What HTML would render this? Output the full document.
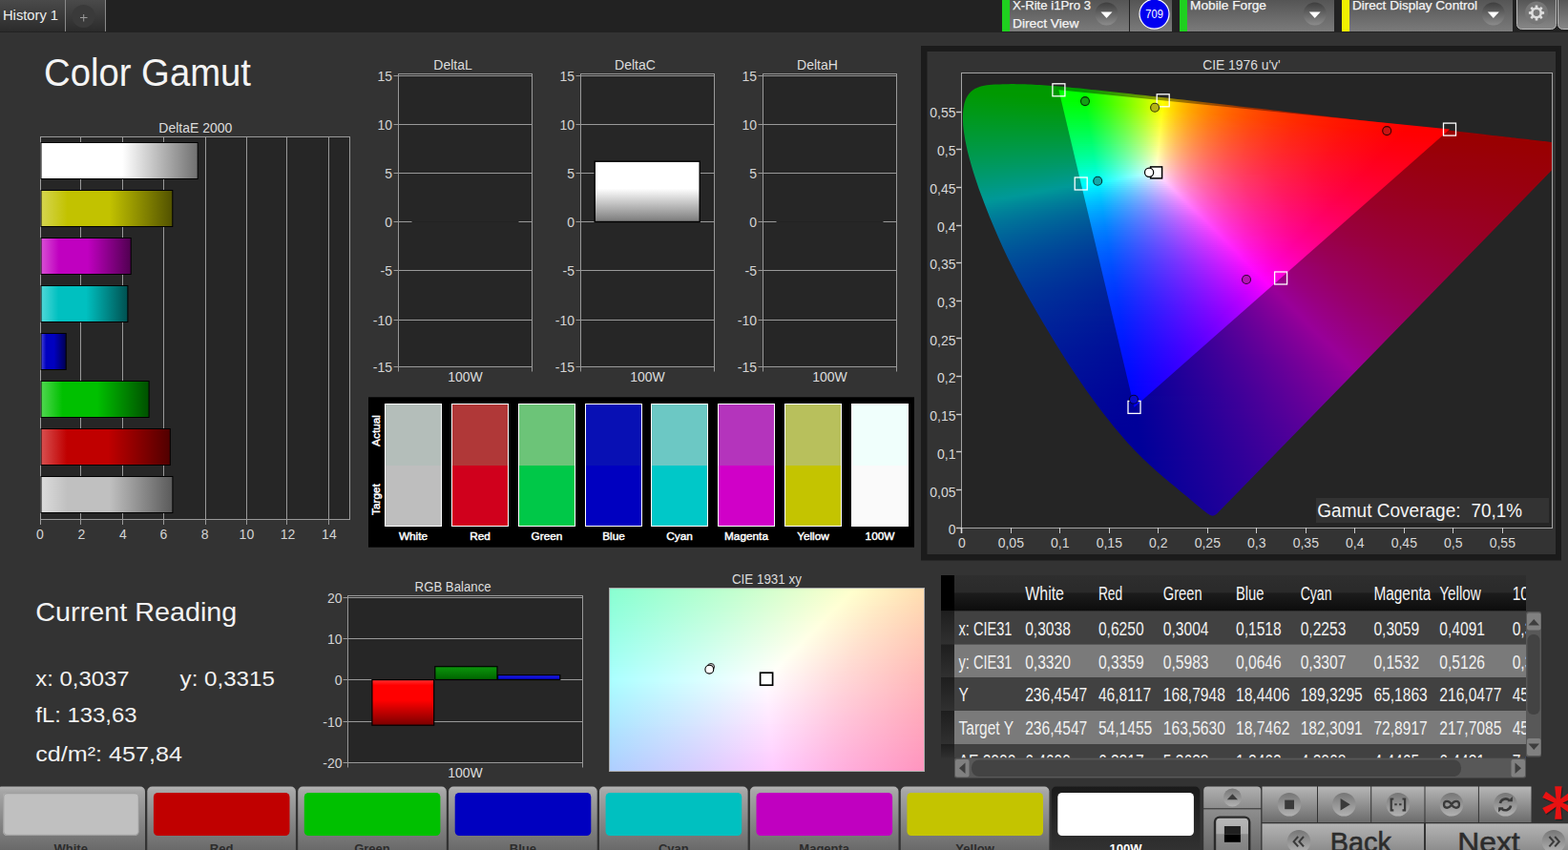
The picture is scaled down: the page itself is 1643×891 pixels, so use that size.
<!DOCTYPE html>
<html lang="en"><head><meta charset="utf-8"><title>Color Gamut</title>
<style>
html,body{margin:0;padding:0}
body{width:1643px;height:891px;overflow:hidden;background:#333;position:relative;font-family:"Liberation Sans",sans-serif}
svg{position:absolute;left:0;top:0}
text{font-family:"Liberation Sans",sans-serif}
.cie{position:absolute;overflow:hidden}
.cie i{position:absolute;left:0;width:100%;height:2px;display:block}
</style></head>
<body>
<svg width="1643" height="891" viewBox="0 0 1643 891">
<rect x="965" y="48" width="671" height="539.5" fill="#1b1b1b"/>
<rect x="971.5" y="54" width="658.5" height="527" fill="#333"/>
<rect x="1007.5" y="76.5" width="619" height="477" fill="#252525" stroke="#a4a4a4" stroke-width="1"/>
</svg>
<div class="cie" style="left:1008px;top:77px;width:618px;height:476px;clip-path:polygon(259.6px 462.7px,259.1px 462.4px,258.6px 462.1px,258.1px 461.8px,257.5px 461.4px,256.9px 461.0px,256.3px 460.5px,255.6px 460.0px,254.9px 459.4px,254.1px 458.8px,253.3px 458.2px,252.4px 457.5px,251.4px 456.7px,250.4px 455.9px,249.3px 455.0px,248.1px 454.1px,246.9px 453.1px,245.7px 452.0px,244.4px 450.9px,243.0px 449.7px,241.6px 448.5px,240.1px 447.2px,238.5px 445.9px,236.9px 444.5px,235.1px 443.0px,233.2px 441.5px,231.3px 439.9px,229.2px 438.2px,227.0px 436.4px,224.8px 434.5px,222.4px 432.5px,219.9px 430.5px,217.4px 428.4px,214.8px 426.2px,212.0px 423.9px,209.2px 421.5px,206.2px 418.9px,203.1px 416.2px,199.9px 413.3px,196.5px 410.3px,193.1px 407.1px,189.6px 403.7px,185.9px 400.1px,182.1px 396.3px,178.1px 392.1px,173.8px 387.4px,169.3px 382.3px,164.4px 376.6px,159.3px 370.4px,153.8px 363.6px,148.2px 356.5px,142.5px 348.9px,136.5px 340.8px,130.5px 332.4px,124.3px 323.5px,117.9px 314.1px,111.4px 304.3px,104.9px 294.0px,98.3px 283.4px,91.7px 272.6px,85.1px 261.5px,78.5px 250.3px,72.0px 238.9px,65.6px 227.5px,59.4px 216.0px,53.5px 204.5px,47.9px 193.2px,42.6px 182.0px,37.7px 171.0px,33.1px 160.3px,28.8px 149.9px,24.8px 139.8px,21.1px 130.1px,17.7px 120.9px,14.7px 112.1px,12.0px 103.8px,9.7px 96.0px,7.7px 88.7px,5.9px 81.9px,4.5px 75.5px,3.3px 69.5px,2.4px 64.0px,1.7px 58.9px,1.2px 54.2px,1.0px 49.8px,0.9px 45.7px,1.0px 41.9px,1.3px 38.3px,1.8px 34.9px,2.4px 31.7px,3.3px 28.8px,4.4px 26.0px,5.8px 23.5px,7.4px 21.2px,9.2px 19.2px,11.3px 17.4px,13.5px 16.0px,15.9px 14.9px,18.3px 14.0px,20.8px 13.3px,23.4px 12.7px,26.0px 12.3px,28.6px 12.0px,31.3px 11.8px,34.1px 11.6px,36.9px 11.5px,39.7px 11.4px,42.6px 11.3px,45.5px 11.2px,48.4px 11.2px,51.4px 11.1px,54.3px 11.1px,57.2px 11.2px,60.1px 11.2px,63.1px 11.3px,66.1px 11.3px,69.1px 11.4px,72.1px 11.6px,75.2px 11.7px,78.3px 11.9px,81.4px 12.1px,84.6px 12.3px,87.9px 12.5px,91.2px 12.7px,94.5px 13.0px,97.9px 13.2px,101.4px 13.5px,104.9px 13.8px,108.5px 14.2px,112.2px 14.5px,115.9px 14.9px,119.7px 15.2px,123.6px 15.6px,127.5px 16.0px,131.5px 16.4px,135.6px 16.9px,139.8px 17.3px,144.1px 17.8px,148.5px 18.2px,153.0px 18.7px,157.5px 19.2px,162.2px 19.7px,166.9px 20.3px,171.7px 20.8px,176.7px 21.3px,181.7px 21.9px,186.8px 22.5px,192.1px 23.1px,197.4px 23.7px,202.9px 24.3px,208.5px 24.9px,214.1px 25.6px,219.9px 26.2px,225.8px 26.9px,231.8px 27.6px,237.9px 28.3px,244.1px 29.0px,250.4px 29.8px,256.9px 30.5px,263.4px 31.2px,270.0px 32.0px,276.7px 32.8px,283.6px 33.6px,290.5px 34.4px,297.5px 35.2px,304.6px 36.0px,311.8px 36.8px,319.0px 37.6px,326.4px 38.5px,333.8px 39.3px,341.2px 40.2px,348.7px 41.1px,356.3px 41.9px,363.9px 42.8px,371.4px 43.7px,378.9px 44.5px,386.3px 45.4px,393.7px 46.2px,400.9px 47.1px,408.2px 47.9px,415.4px 48.7px,422.6px 49.6px,429.8px 50.4px,437.0px 51.2px,444.0px 52.0px,450.9px 52.8px,457.6px 53.6px,464.2px 54.3px,470.6px 55.1px,476.9px 55.8px,483.0px 56.5px,489.0px 57.2px,494.8px 57.8px,500.5px 58.5px,506.0px 59.1px,511.4px 59.7px,516.6px 60.3px,521.6px 60.9px,526.4px 61.5px,531.1px 62.0px,535.6px 62.5px,540.0px 63.0px,544.2px 63.5px,548.2px 64.0px,552.1px 64.4px,555.9px 64.9px,559.6px 65.3px,563.1px 65.7px,566.5px 66.1px,569.8px 66.4px,573.0px 66.8px,576.1px 67.2px,579.2px 67.5px,582.1px 67.9px,585.0px 68.2px,587.8px 68.5px,590.5px 68.8px,593.1px 69.1px,595.6px 69.4px,598.0px 69.7px,600.3px 70.0px,602.5px 70.2px,604.7px 70.5px,606.8px 70.7px,608.7px 70.9px,610.6px 71.1px,612.3px 71.3px,613.9px 71.5px,615.5px 71.7px,616.9px 71.9px,618.3px 72.0px,619.6px 72.2px,620.9px 72.3px,622.1px 72.5px,623.3px 72.6px,624.4px 72.7px,625.4px 72.9px,626.4px 73.0px,627.3px 73.1px,628.1px 73.2px,628.9px 73.3px,629.6px 73.3px,630.3px 73.4px,630.9px 73.5px,631.4px 73.5px,632.0px 73.6px,632.5px 73.7px,633.0px 73.7px,633.5px 73.8px,634.0px 73.8px,634.4px 73.9px,634.9px 73.9px,635.3px 74.0px,635.7px 74.0px,636.0px 74.1px,636.4px 74.1px,636.8px 74.2px,637.2px 74.2px,637.6px 74.3px,638.0px 74.3px,638.3px 74.3px,638.7px 74.4px,639.1px 74.4px,639.4px 74.5px,639.8px 74.5px,640.1px 74.5px,640.3px 74.6px,640.6px 74.6px,640.7px 74.6px,640.9px 74.6px,641.0px 74.7px,641.2px 74.7px,641.3px 74.7px,641.4px 74.7px,641.5px 74.7px,641.6px 74.7px,641.7px 74.7px,641.8px 74.7px,641.8px 74.7px,641.9px 74.8px,641.9px 74.8px,641.9px 76.8px,269.5px 459.1px,267.2px 461.4px,265.0px 463.1px,262.6px 463.7px,260.6px 463.3px)">
<i style="top:10px;background:linear-gradient(90deg,#090 34.5px,#090 73.5px)"></i>
<i style="top:12px;background:linear-gradient(90deg,#090 17.5px,#090 103.5px)"></i>
<i style="top:14px;background:linear-gradient(90deg,#090 12.5px,#090 125.5px)"></i>
<i style="top:16px;background:linear-gradient(90deg,#090 9.5px,#090 126.5px,#1a9900 144.5px)"></i>
<i style="top:18px;background:linear-gradient(90deg,#009901 6.5px,#090 126.5px,#189900 143.5px,#399900 163.5px)"></i>
<i style="top:20px;background:linear-gradient(90deg,#009903 5.5px,#090 45.5px,#090 127.5px,#2b9900 155.5px,#5a9900 181.5px)"></i>
<i style="top:22px;background:linear-gradient(90deg,#009905 3.5px,#090 66.5px,#090 127.5px,#3a9900 164.5px,#5a9900 181.5px,#7c9900 198.5px)"></i>
<i style="top:24px;background:linear-gradient(90deg,#009907 2.5px,#009901 77.5px,#090 127.5px,#1f9900 148.5px,#479900 171.5px,#6e9900 191.5px,#989900 210.5px,#998d00 216.5px)"></i>
<i style="top:26px;background:linear-gradient(90deg,#00990a 1.5px,#009901 99.5px,#090 128.5px,#249900 151.5px,#489900 172.5px,#709900 192.5px,#989900 210.5px,#998000 222.5px,#996e00 233.5px)"></i>
<i style="top:28px;background:linear-gradient(90deg,#00990c 1.5px,#090 128.5px,#239900 151.5px,#489900 172.5px,#709900 192.5px,#990 210.5px,#998600 219.5px,#997400 229.5px,#995700 251.5px)"></i>
<i style="top:30px;background:linear-gradient(90deg,#00990e 0.5px,#009902 128.5px,#209900 149.5px,#469900 171.5px,#6e9900 191.5px,#990 210.5px,#998000 222.5px,#996b00 235.5px,#995800 250.5px,#994700 268.5px)"></i>
<i style="top:32px;background:linear-gradient(90deg,#009910 0.5px,#019905 129.5px,#239902 151.5px,#469900 171.5px,#6e9900 191.5px,#979900 209.5px,#999800 210.5px,#997800 226.5px,#996100 242.5px,#994c00 262.5px,#993a00 285.5px)"></i>
<i style="top:34px;background:linear-gradient(90deg,#009912 0.5px,#009908 129.5px,#239905 151.5px,#469903 171.5px,#6e9900 191.5px,#989900 209.5px,#997400 228.5px,#995900 248.5px,#994200 273.5px,#992f00 303.5px)"></i>
<i style="top:36px;background:linear-gradient(90deg,#009914 0.5px,#00990b 129.5px,#219908 150.5px,#469906 171.5px,#6f9903 191.5px,#989901 209.5px,#998400 219.5px,#997200 229.5px,#996200 240.5px,#995300 253.5px,#993b00 283.5px,#992700 320.5px)"></i>
<i style="top:38px;background:linear-gradient(90deg,#009916 0.5px,#01990d 130.5px,#24990b 152.5px,#489909 172.5px,#6f9906 191.5px,#999904 209.5px,#998102 220.5px,#996f00 231.5px,#995d00 244.5px,#994e00 258.5px,#993400 293.5px,#991f00 338.5px)"></i>
<i style="top:40px;background:linear-gradient(90deg,#009918 0.5px,#009910 130.5px,#23990e 152.5px,#48990c 172.5px,#6f990a 191.5px,#999907 209.5px,#998105 220.5px,#996b03 233.5px,#995901 247.5px,#994900 263.5px,#993a00 282.5px,#992e00 303.5px,#991900 355.5px)"></i>
<i style="top:42px;background:linear-gradient(90deg,#00991a 0.5px,#009913 130.5px,#209911 150.5px,#46990f 171.5px,#6d990d 190.5px,#97990b 208.5px,#99980b 209.5px,#997d08 222.5px,#996805 235.5px,#995503 250.5px,#994401 268.5px,#993500 289.5px,#992900 313.5px,#991400 372.5px)"></i>
<i style="top:44px;background:linear-gradient(90deg,#00991d 0.5px,#019916 131.5px,#239914 152.5px,#489913 172.5px,#6f9911 191.5px,#98990f 208.5px,#997c0b 222.5px,#996608 236.5px,#995105 253.5px,#994002 273.5px,#993100 296.5px,#992400 323.5px,#990f00 390.5px)"></i>
<i style="top:46px;background:linear-gradient(90deg,#00991f 0.5px,#009919 131.5px,#229918 152.5px,#459916 171.5px,#699915 188.5px,#999713 209.5px,#997c0e 222.5px,#99630a 238.5px,#994e07 256.5px,#993c04 278.5px,#992d01 303.5px,#992000 332.5px,#991500 367.5px,#990b00 407.5px)"></i>
<i style="top:48px;background:linear-gradient(90deg,#009921 0.5px,#00991c 131.5px,#1f991b 150.5px,#43991a 170.5px,#679918 187.5px,#989917 208.5px,#999716 209.5px,#997911 223.5px,#995f0c 240.5px,#994b08 259.5px,#993905 282.5px,#992902 309.5px,#991c00 342.5px,#910 380.5px,#990800 425.5px)"></i>
<i style="top:50px;background:linear-gradient(90deg,#009923 0.5px,#01991f 132.5px,#24991e 153.5px,#47991d 172.5px,#70991c 191.5px,#99991b 208.5px,#997914 223.5px,#995f0f 240.5px,#99480a 261.5px,#993506 286.5px,#992603 316.5px,#991901 351.5px,#990e00 393.5px,#990400 442.5px)"></i>
<i style="top:52px;background:linear-gradient(90deg,#009925 0.5px,#092 132.5px,#239921 153.5px,#479920 172.5px,#6e991f 190.5px,#99991e 208.5px,#997817 223.5px,#995c11 242.5px,#99450c 264.5px,#993308 290.5px,#992304 321.5px,#991601 359.5px,#990b00 404.5px,#990200 459.5px)"></i>
<i style="top:54px;background:linear-gradient(90deg,#009928 0.5px,#009925 132.5px,#1f9925 151.5px,#459924 171.5px,#6c9923 189.5px,#999822 208.5px,#99851e 216.5px,#99761a 224.5px,#995a13 243.5px,#99430e 266.5px,#993009 294.5px,#991f05 329.5px,#991202 371.5px,#990600 427.5px,#900 477.5px)"></i>
<i style="top:56px;background:linear-gradient(90deg,#00992a 0.5px,#019928 133.5px,#239928 153.5px,#479927 172.5px,#699927 188.5px,#999826 208.5px,#998521 216.5px,#99741d 225.5px,#995715 245.5px,#99400f 269.5px,#992d0a 299.5px,#991c06 338.5px,#990e02 387.5px,#900 466.5px,#900 494.5px)"></i>
<i style="top:58px;background:linear-gradient(90deg,#00992c 0.5px,#00992b 133.5px,#22992b 153.5px,#45992b 171.5px,#67992b 187.5px,#98992b 207.5px,#99972a 208.5px,#998425 216.5px,#997320 225.5px,#99631b 235.5px,#995417 247.5px,#993d10 273.5px,#99290b 305.5px,#991806 349.5px,#990a02 405.5px,#900 465.5px,#900 512.5px)"></i>
<i style="top:60px;background:linear-gradient(90deg,#00992f 0.5px,#00992f 133.5px,#20992f 152.5px,#47992f 172.5px,#6e992f 190.5px,#99992f 207.5px,#998428 216.5px,#997323 225.5px,#99631e 235.5px,#99541a 247.5px,#993b12 274.5px,#99270c 308.5px,#991507 357.5px,#990702 420.5px,#900 463.5px,#900 529.5px)"></i>
<i style="top:62px;background:linear-gradient(90deg,#009931 0.5px,#009932 133.5px,#1e9932 151.5px,#493 171.5px,#6c9933 189.5px,#993 207.5px,#99832c 216.5px,#997226 225.5px,#996121 236.5px,#99521c 248.5px,#993914 277.5px,#99240d 313.5px,#991207 367.5px,#990302 438.5px,#990001 462.5px,#900 547.5px)"></i>
<i style="top:64px;background:linear-gradient(90deg,#093 0.5px,#009935 134.5px,#239936 154.5px,#469936 172.5px,#6c9937 189.5px,#999837 207.5px,#998330 216.5px,#997029 226.5px,#995f23 237.5px,#99501e 250.5px,#993615 280.5px,#99220e 317.5px,#990f07 377.5px,#990002 456.5px,#900 564.5px)"></i>
<i style="top:66px;background:linear-gradient(90deg,#009936 0.5px,#009939 134.5px,#1f9939 152.5px,#44993a 171.5px,#6a993b 188.5px,#99983b 207.5px,#998233 216.5px,#996f2c 226.5px,#995d26 238.5px,#994e20 251.5px,#993416 282.5px,#99200f 322.5px,#990e08 380.5px,#990003 457.5px,#900 581.5px)"></i>
<i style="top:68px;background:linear-gradient(90deg,#009938 1.5px,#00993c 134.5px,#1d993d 151.5px,#42993e 170.5px,#65993f 186.5px,#989940 206.5px,#999740 207.5px,#998237 216.5px,#996d2f 227.5px,#995b28 239.5px,#994c22 252.5px,#993f1d 267.5px,#993218 285.5px,#991e10 326.5px,#990d09 382.5px,#990004 455.5px,#900 599.5px)"></i>
<i style="top:70px;background:linear-gradient(90deg,#00993a 1.5px,#009940 135.5px,#229941 154.5px,#449942 171.5px,#6d9943 189.5px,#999945 206.5px,#999744 207.5px,#997f3a 217.5px,#996b31 228.5px,#995a2a 240.5px,#994a24 254.5px,#993019 287.5px,#991c11 330.5px,#990c0a 384.5px,#990005 453.5px,#900 616.5px)"></i>
<i style="top:72px;background:linear-gradient(90deg,#00993d 1.5px,#009943 135.5px,#229945 154.5px,#469946 172.5px,#6d9948 189.5px,#999949 206.5px,#99833f 215.5px,#996e36 226.5px,#995c2e 238.5px,#994b27 252.5px,#993d21 268.5px,#99301b 286.5px,#991c12 329.5px,#990c0b 383.5px,#990006 451.5px,#900 617.5px)"></i>
<i style="top:74px;background:linear-gradient(90deg,#00993f 2.5px,#009947 135.5px,#1d9948 152.5px,#44994a 171.5px,#6b994c 188.5px,#99984e 206.5px,#998243 215.5px,#996d39 226.5px,#995b31 238.5px,#994b2a 252.5px,#993c23 268.5px,#99301d 286.5px,#991b14 329.5px,#990c0d 382.5px,#990007 449.5px,#900 617.5px)"></i>
<i style="top:76px;background:linear-gradient(90deg,#009942 2.5px,#00994a 136.5px,#23994c 155.5px,#46994e 172.5px,#6b9950 188.5px,#999852 206.5px,#998247 215.5px,#996c3d 226.5px,#995a34 238.5px,#994a2c 252.5px,#993c25 268.5px,#992f1f 286.5px,#991b15 329.5px,#990c0e 381.5px,#990008 447.5px,#990001 617.5px)"></i>
<i style="top:78px;background:linear-gradient(90deg,#094 3.5px,#00994e 136.5px,#219950 154.5px,#469952 172.5px,#689954 187.5px,#989957 205.5px,#999756 206.5px,#99814b 215.5px,#996c40 226.5px,#995a37 238.5px,#994a2f 252.5px,#993b28 268.5px,#992f21 286.5px,#991b17 329.5px,#990c0f 380.5px,#990009 445.5px,#990001 617.5px)"></i>
<i style="top:80px;background:linear-gradient(90deg,#009947 3.5px,#009952 136.5px,#1c9954 152.5px,#439956 171.5px,#6d9959 189.5px,#98995c 205.5px,#99975b 206.5px,#99804f 215.5px,#996b44 226.5px,#99593a 238.5px,#994931 252.5px,#993b2a 268.5px,#992f23 286.5px,#991a18 329.5px,#990c11 379.5px,#99000a 443.5px,#990002 617.5px)"></i>
<i style="top:82px;background:linear-gradient(90deg,#00994a 4.5px,#009956 137.5px,#249958 156.5px,#48995b 173.5px,#6e995e 189.5px,#999961 205.5px,#998254 214.5px,#996c48 225.5px,#995a3e 237.5px,#994a35 251.5px,#993c2d 266.5px,#992f26 284.5px,#991b1a 327.5px,#990c12 377.5px,#99000b 441.5px,#990002 617.5px)"></i>
<i style="top:84px;background:linear-gradient(90deg,#00994c 4.5px,#009959 137.5px,#21995c 155.5px,#47995f 173.5px,#6e9962 189.5px,#996 205.5px,#998258 214.5px,#996c4c 225.5px,#995a41 237.5px,#994937 251.5px,#993b2f 266.5px,#992f28 284.5px,#991a1c 327.5px,#990c13 377.5px,#99000d 439.5px,#990003 617.5px)"></i>
<i style="top:86px;background:linear-gradient(90deg,#00994f 5.5px,#00995d 137.5px,#1f9960 154.5px,#459964 172.5px,#6b9967 188.5px,#99986a 205.5px,#99815c 214.5px,#996b4f 225.5px,#995944 237.5px,#99493a 251.5px,#993b32 266.5px,#992e2a 284.5px,#991a1d 327.5px,#990b15 376.5px,#99000e 438.5px,#990004 617.5px)"></i>
<i style="top:88px;background:linear-gradient(90deg,#009952 5.5px,#009961 138.5px,#239965 156.5px,#459968 172.5px,#69996c 187.5px,#99976f 205.5px,#998060 214.5px,#996b53 225.5px,#995847 237.5px,#99483d 251.5px,#993a34 266.5px,#992e2c 284.5px,#99191f 327.5px,#990b16 376.5px,#99000f 436.5px,#990004 617.5px)"></i>
<i style="top:90px;background:linear-gradient(90deg,#009954 6.5px,#009965 138.5px,#209969 155.5px,#45996d 172.5px,#6e9971 189.5px,#989975 204.5px,#999774 205.5px,#998065 214.5px,#996a56 225.5px,#99584a 237.5px,#99473f 251.5px,#993a36 266.5px,#992d2e 284.5px,#991920 327.5px,#990b17 375.5px,#990010 434.5px,#990005 617.5px)"></i>
<i style="top:92px;background:linear-gradient(90deg,#009957 6.5px,#00995f 78.5px,#009969 138.5px,#1e996d 154.5px,#429971 171.5px,#6c9976 188.5px,#99997b 204.5px,#999679 205.5px,#997f69 214.5px,#99695a 225.5px,#99574d 237.5px,#994843 250.5px,#993a39 265.5px,#992d30 283.5px,#991922 327.5px,#990b19 374.5px,#901 432.5px,#990005 617.5px)"></i>
<i style="top:94px;background:linear-gradient(90deg,#00995a 7.5px,#009963 79.5px,#01996e 139.5px,#249972 157.5px,#479976 173.5px,#6f997b 189.5px,#999980 204.5px,#99816f 213.5px,#996b5f 224.5px,#995851 236.5px,#994846 249.5px,#993a3c 264.5px,#992e33 282.5px,#991924 325.5px,#990b1a 372.5px,#990012 430.5px,#990006 617.5px)"></i>
<i style="top:96px;background:linear-gradient(90deg,#00995d 7.5px,#096 79.5px,#009972 139.5px,#219976 156.5px,#47997b 173.5px,#6c9980 188.5px,#999885 204.5px,#998073 213.5px,#996a62 224.5px,#995755 236.5px,#994849 249.5px,#993a3f 264.5px,#992d35 282.5px,#991826 325.5px,#990b1c 371.5px,#990014 428.5px,#99000c 511.5px,#990007 617.5px)"></i>
<i style="top:98px;background:linear-gradient(90deg,#009960 8.5px,#00996a 80.5px,#009976 139.5px,#1f997a 155.5px,#449980 172.5px,#679984 186.5px,#99988a 204.5px,#998077 213.5px,#996966 224.5px,#995758 236.5px,#99474c 249.5px,#993941 264.5px,#992d37 282.5px,#991827 325.5px,#990b1d 370.5px,#990015 426.5px,#99000d 509.5px,#990007 617.5px)"></i>
<i style="top:100px;background:linear-gradient(90deg,#009963 9.5px,#00996e 81.5px,#01997b 140.5px,#20997f 156.5px,#449984 172.5px,#679989 186.5px,#989991 203.5px,#99978f 204.5px,#997f7c 213.5px,#99696a 224.5px,#99565b 236.5px,#99474f 249.5px,#993944 264.5px,#992c39 282.5px,#991829 325.5px,#990b1f 369.5px,#990016 424.5px,#99000e 508.5px,#990008 617.5px)"></i>
<i style="top:102px;background:linear-gradient(90deg,#009965 9.5px,#009971 81.5px,#00997f 140.5px,#209984 156.5px,#449989 172.5px,#6d9990 188.5px,#999996 203.5px,#999694 204.5px,#997e80 213.5px,#99686e 224.5px,#99565e 236.5px,#994652 249.5px,#993846 264.5px,#992c3b 282.5px,#99172b 325.5px,#990a20 369.5px,#990017 422.5px,#99000f 507.5px,#990008 617.5px)"></i>
<i style="top:104px;background:linear-gradient(90deg,#009968 10.5px,#009975 81.5px,#009983 140.5px,#1b9988 154.5px,#3d998d 169.5px,#5d9993 182.5px,#7e9998 194.5px,#969699 203.5px,#999397 205.5px,#997b83 214.5px,#996670 225.5px,#995461 237.5px,#994453 250.5px,#993748 265.5px,#992a3d 283.5px,#99162c 326.5px,#990a21 368.5px,#990019 420.5px,#990010 505.5px,#990009 617.5px)"></i>
<i style="top:106px;background:linear-gradient(90deg,#00996b 10.5px,#009978 82.5px,#019988 141.5px,#2c9990 162.5px,#5d9998 182.5px,#968f99 205.5px,#998c97 207.5px,#997683 216.5px,#996271 227.5px,#995061 239.5px,#994255 252.5px,#993549 267.5px,#99293e 285.5px,#99152d 329.5px,#990922 369.5px,#99001a 418.5px,#901 503.5px,#99000a 615.5px)"></i>
<i style="top:108px;background:linear-gradient(90deg,#00996e 11.5px,#00997c 82.5px,#00998d 141.5px,#219993 157.5px,#4a9899 175.5px,#968999 207.5px,#998697 209.5px,#997284 218.5px,#995e72 229.5px,#994d62 241.5px,#993e55 255.5px,#99263e 289.5px,#99132d 332.5px,#990923 370.5px,#99001b 416.5px,#990012 502.5px,#99000a 614.5px)"></i>
<i style="top:110px;background:linear-gradient(90deg,#009972 12.5px,#009980 83.5px,#009991 141.5px,#2d9899 163.5px,#968399 209.5px,#998197 211.5px,#996d84 220.5px,#995a72 231.5px,#994a63 243.5px,#993c56 257.5px,#99243f 291.5px,#99122e 335.5px,#99001d 414.5px,#990013 500.5px,#99000b 612.5px)"></i>
<i style="top:112px;background:linear-gradient(90deg,#009975 12.5px,#009984 83.5px,#019997 142.5px,#2e9399 164.5px,#967e99 211.5px,#997b97 213.5px,#996783 223.5px,#995572 234.5px,#994663 246.5px,#993956 260.5px,#992240 294.5px,#99112e 338.5px,#99001e 412.5px,#990014 497.5px,#99000c 610.5px)"></i>
<i style="top:114px;background:linear-gradient(90deg,#009978 13.5px,#009985 73.5px,#009998 133.5px,#009799 142.5px,#418a99 174.5px,#967899 213.5px,#997697 215.5px,#996283 225.5px,#995272 236.5px,#994263 249.5px,#993656 263.5px,#992040 297.5px,#990f2f 341.5px,#99001f 411.5px,#990015 496.5px,#99000c 608.5px)"></i>
<i style="top:116px;background:linear-gradient(90deg,#00997b 14.5px,#098 72.5px,#009998 121.5px,#009299 142.5px,#3f8599 174.5px,#967399 215.5px,#997197 217.5px,#995e84 227.5px,#994f73 238.5px,#994064 251.5px,#993457 265.5px,#991f41 299.5px,#990e30 343.5px,#990021 409.5px,#990016 494.5px,#99000d 606.5px)"></i>
<i style="top:118px;background:linear-gradient(90deg,#00997e 14.5px,#00998a 65.5px,#009998 109.5px,#008e99 142.5px,#3a8199 173.5px,#996c97 219.5px,#995b84 229.5px,#994b74 240.5px,#993d65 253.5px,#993158 267.5px,#991d42 302.5px,#990d31 346.5px,#902 407.5px,#990017 492.5px,#99000e 604.5px)"></i>
<i style="top:120px;background:linear-gradient(90deg,#009982 15.5px,#009998 97.5px,#008999 143.5px,#427b99 178.5px,#996897 221.5px,#995785 231.5px,#994773 243.5px,#993a64 256.5px,#992f58 270.5px,#991b42 305.5px,#990c31 349.5px,#990024 405.5px,#990018 490.5px,#99000f 602.5px)"></i>
<i style="top:122px;background:linear-gradient(90deg,#009985 16.5px,#009998 85.5px,#008599 143.5px,#407899 178.5px,#996397 223.5px,#995587 232.5px,#994776 243.5px,#99305d 267.5px,#991e48 297.5px,#991038 334.5px,#990025 403.5px,#990019 488.5px,#99000f 600.5px)"></i>
<i style="top:124px;background:linear-gradient(90deg,#009989 17.5px,#009899 79.5px,#008199 143.5px,#3c7499 177.5px,#995f98 225.5px,#995187 234.5px,#947 245.5px,#992e5e 269.5px,#991d49 299.5px,#990f38 336.5px,#990027 401.5px,#99001a 486.5px,#990010 598.5px)"></i>
<i style="top:126px;background:linear-gradient(90deg,#00998c 17.5px,#009899 67.5px,#007d99 144.5px,#446f99 182.5px,#995b98 227.5px,#994e87 236.5px,#994178 247.5px,#992c5e 271.5px,#991b4a 301.5px,#990e39 338.5px,#990028 399.5px,#99001b 484.5px,#901 596.5px)"></i>
<i style="top:128px;background:linear-gradient(90deg,#00998f 18.5px,#009899 55.5px,#007a99 144.5px,#426b99 182.5px,#995798 229.5px,#994b88 238.5px,#993e78 249.5px,#992a5f 273.5px,#991a4b 303.5px,#990d3a 339.5px,#99002a 397.5px,#99001c 481.5px,#990012 594.5px)"></i>
<i style="top:130px;background:linear-gradient(90deg,#009993 19.5px,#009899 43.5px,#079 144.5px,#3e6999 181.5px,#995498 231.5px,#994788 240.5px,#993c79 251.5px,#992860 275.5px,#99194c 305.5px,#990c3b 341.5px,#99002c 395.5px,#99001d 479.5px,#990013 592.5px)"></i>
<i style="top:132px;background:linear-gradient(90deg,#009996 19.5px,#009499 46.5px,#007399 145.5px,#436499 185.5px,#995098 233.5px,#993979 253.5px,#992761 277.5px,#99174c 307.5px,#990b3c 343.5px,#99002d 393.5px,#99001e 477.5px,#990013 590.5px)"></i>
<i style="top:134px;background:linear-gradient(90deg,#009899 20.5px,#007099 145.5px,#436199 186.5px,#994d98 235.5px,#99377a 255.5px,#992561 279.5px,#99164d 309.5px,#990a3d 345.5px,#99002f 391.5px,#990020 475.5px,#990014 588.5px)"></i>
<i style="top:136px;background:linear-gradient(90deg,#009499 21.5px,#006d99 145.5px,#3f5e99 185.5px,#994998 237.5px,#99347a 257.5px,#992362 281.5px,#99154f 310.5px,#99093e 346.5px,#990031 389.5px,#990025 443.5px,#99001c 508.5px,#990015 586.5px)"></i>
<i style="top:138px;background:linear-gradient(90deg,#009199 22.5px,#006a99 146.5px,#445a99 189.5px,#994698 239.5px,#99327b 259.5px,#992163 283.5px,#99144f 312.5px,#99083f 348.5px,#990032 387.5px,#990026 443.5px,#99001d 507.5px,#990016 584.5px)"></i>
<i style="top:140px;background:linear-gradient(90deg,#008d99 23.5px,#006799 146.5px,#425899 189.5px,#994398 241.5px,#99307b 261.5px,#992064 285.5px,#991350 314.5px,#990840 349.5px,#990034 385.5px,#990027 443.5px,#99001e 506.5px,#990017 582.5px)"></i>
<i style="top:142px;background:linear-gradient(90deg,#008a99 23.5px,#006499 146.5px,#415599 189.5px,#994098 243.5px,#992d7c 263.5px,#991e64 287.5px,#991151 316.5px,#990741 351.5px,#990036 383.5px,#990028 444.5px,#990017 580.5px)"></i>
<i style="top:144px;background:linear-gradient(90deg,#008799 24.5px,#006199 147.5px,#455199 193.5px,#993d98 245.5px,#992b7c 265.5px,#991d65 289.5px,#991051 318.5px,#990641 353.5px,#990038 381.5px,#990029 445.5px,#990018 578.5px)"></i>
<i style="top:146px;background:linear-gradient(90deg,#008499 25.5px,#005f99 147.5px,#444f99 193.5px,#993a98 247.5px,#99297c 267.5px,#991b65 291.5px,#990f52 320.5px,#990542 354.5px,#99003a 379.5px,#99002a 445.5px,#990019 576.5px)"></i>
<i style="top:148px;background:linear-gradient(90deg,#008199 26.5px,#005c99 147.5px,#424d99 193.5px,#993898 249.5px,#99277d 269.5px,#991966 293.5px,#990e53 322.5px,#990443 356.5px,#99003c 377.5px,#99002b 446.5px,#99001a 575.5px)"></i>
<i style="top:150px;background:linear-gradient(90deg,#007e99 27.5px,#005a99 148.5px,#464999 197.5px,#993598 251.5px,#99257d 271.5px,#991867 295.5px,#990d54 323.5px,#990444 357.5px,#99003d 376.5px,#99002c 446.5px,#99001b 573.5px)"></i>
<i style="top:152px;background:linear-gradient(90deg,#007b99 27.5px,#005899 148.5px,#454799 197.5px,#993398 253.5px,#99237e 273.5px,#991767 297.5px,#990c55 325.5px,#990345 359.5px,#99003f 374.5px,#99002d 447.5px,#99001c 571.5px)"></i>
<i style="top:154px;background:linear-gradient(90deg,#007899 28.5px,#059 148.5px,#434599 197.5px,#993098 255.5px,#99217e 275.5px,#991568 299.5px,#990b55 327.5px,#990246 360.5px,#990042 371.5px,#990039 400.5px,#99002e 447.5px,#99001d 569.5px)"></i>
<i style="top:156px;background:linear-gradient(90deg,#007699 29.5px,#005399 149.5px,#464299 200.5px,#992e98 257.5px,#99207e 277.5px,#991468 301.5px,#990a56 329.5px,#990147 362.5px,#99003a 401.5px,#99002f 447.5px,#99001e 567.5px)"></i>
<i style="top:158px;background:linear-gradient(90deg,#007399 30.5px,#005199 149.5px,#454099 201.5px,#992b98 259.5px,#991e7f 279.5px,#99136a 302.5px,#990957 330.5px,#990148 363.5px,#99003b 402.5px,#990030 447.5px,#99001e 565.5px)"></i>
<i style="top:160px;background:linear-gradient(90deg,#007199 31.5px,#004f99 149.5px,#433f99 200.5px,#992998 261.5px,#991c7f 281.5px,#99116a 304.5px,#990858 332.5px,#990049 364.5px,#99003c 402.5px,#990031 447.5px,#99001f 563.5px)"></i>
<i style="top:162px;background:linear-gradient(90deg,#006e99 32.5px,#004d99 150.5px,#463c99 204.5px,#992798 263.5px,#991b7f 283.5px,#99106b 306.5px,#990758 334.5px,#990049 366.5px,#99003c 404.5px,#990032 448.5px,#990020 561.5px)"></i>
<i style="top:164px;background:linear-gradient(90deg,#006c99 32.5px,#004b99 150.5px,#463a99 205.5px,#992598 265.5px,#991980 285.5px,#990f6b 308.5px,#99065a 335.5px,#99004a 367.5px,#99003e 404.5px,#903 448.5px,#990021 559.5px)"></i>
<i style="top:166px;background:linear-gradient(90deg,#006a99 33.5px,#004999 150.5px,#443899 204.5px,#992398 267.5px,#991780 287.5px,#990e6c 310.5px,#99055a 337.5px,#99004b 368.5px,#99003f 405.5px,#990034 448.5px,#902 557.5px)"></i>
<i style="top:168px;background:linear-gradient(90deg,#006799 34.5px,#004799 151.5px,#473699 208.5px,#992198 269.5px,#991681 288.5px,#990d6d 311.5px,#990153 354.5px,#99004c 369.5px,#990040 405.5px,#990035 448.5px,#990023 555.5px)"></i>
<i style="top:170px;background:linear-gradient(90deg,#006599 35.5px,#004599 151.5px,#473499 209.5px,#991f98 271.5px,#991582 290.5px,#990c6d 313.5px,#990054 355.5px,#99004d 371.5px,#990040 407.5px,#990036 448.5px,#990024 553.5px)"></i>
<i style="top:172px;background:linear-gradient(90deg,#006399 36.5px,#049 151.5px,#439 208.5px,#991d98 273.5px,#991382 292.5px,#990a6e 315.5px,#990057 353.5px,#99004e 372.5px,#990042 407.5px,#990037 448.5px,#990025 551.5px)"></i>
<i style="top:174px;background:linear-gradient(90deg,#006199 37.5px,#004299 152.5px,#483099 212.5px,#991b98 275.5px,#991181 295.5px,#99096e 317.5px,#990059 351.5px,#99004f 373.5px,#990042 408.5px,#990038 448.5px,#990026 549.5px)"></i>
<i style="top:176px;background:linear-gradient(90deg,#005f99 38.5px,#004099 152.5px,#472f99 212.5px,#991a98 277.5px,#991082 297.5px,#99086f 319.5px,#99005c 349.5px,#990050 374.5px,#904 408.5px,#990039 448.5px,#990027 547.5px)"></i>
<i style="top:178px;background:linear-gradient(90deg,#005d99 39.5px,#003f99 152.5px,#452d99 212.5px,#991898 279.5px,#990f83 298.5px,#990770 320.5px,#99005f 347.5px,#990051 375.5px,#904 409.5px,#99003a 448.5px,#990028 545.5px)"></i>
<i style="top:180px;background:linear-gradient(90deg,#005b99 39.5px,#003d99 153.5px,#472b99 215.5px,#991698 281.5px,#990e83 300.5px,#990670 322.5px,#990061 346.5px,#990052 377.5px,#990045 410.5px,#99003a 449.5px,#990029 543.5px)"></i>
<i style="top:182px;background:linear-gradient(90deg,#005999 40.5px,#003c99 153.5px,#472a99 216.5px,#991598 283.5px,#990c83 302.5px,#990571 324.5px,#990064 344.5px,#990052 378.5px,#99003c 448.5px,#99002a 541.5px)"></i>
<i style="top:184px;background:linear-gradient(90deg,#005799 41.5px,#003a99 153.5px,#462899 216.5px,#991398 285.5px,#990b84 304.5px,#990471 326.5px,#906 342.5px,#990053 379.5px,#99003d 448.5px,#99002b 539.5px)"></i>
<i style="top:186px;background:linear-gradient(90deg,#059 42.5px,#003999 154.5px,#482699 219.5px,#991198 287.5px,#990a84 306.5px,#990372 327.5px,#990069 340.5px,#990054 380.5px,#99003e 449.5px,#99002c 538.5px)"></i>
<i style="top:188px;background:linear-gradient(90deg,#005399 43.5px,#003799 154.5px,#482599 220.5px,#991098 289.5px,#990984 308.5px,#990273 329.5px,#990063 353.5px,#905 381.5px,#99003f 448.5px,#99002d 536.5px)"></i>
<i style="top:190px;background:linear-gradient(90deg,#005299 44.5px,#003699 154.5px,#472499 220.5px,#990e98 291.5px,#990784 310.5px,#990173 331.5px,#990064 355.5px,#990056 382.5px,#990040 448.5px,#99002e 534.5px)"></i>
<i style="top:192px;background:linear-gradient(90deg,#005099 45.5px,#003599 155.5px,#492299 223.5px,#990d98 293.5px,#990685 311.5px,#990074 332.5px,#990065 356.5px,#990057 383.5px,#990041 448.5px,#990030 532.5px)"></i>
<i style="top:194px;background:linear-gradient(90deg,#004e99 46.5px,#039 155.5px,#482199 224.5px,#990c98 295.5px,#990586 313.5px,#990074 334.5px,#906 357.5px,#990058 384.5px,#990042 448.5px,#990031 530.5px)"></i>
<i style="top:196px;background:linear-gradient(90deg,#004d99 47.5px,#003299 155.5px,#462099 223.5px,#990a98 297.5px,#990485 316.5px,#990075 336.5px,#906 359.5px,#990059 385.5px,#990043 448.5px,#990032 528.5px)"></i>
<i style="top:198px;background:linear-gradient(90deg,#004b99 48.5px,#003199 156.5px,#481e99 226.5px,#990999 299.5px,#99007e 327.5px,#990075 338.5px,#99005a 386.5px,#904 448.5px,#903 526.5px)"></i>
<i style="top:200px;background:linear-gradient(90deg,#004999 49.5px,#003099 156.5px,#481d99 227.5px,#990899 301.5px,#990081 325.5px,#990076 339.5px,#99005b 387.5px,#990045 448.5px,#990034 524.5px)"></i>
<i style="top:202px;background:linear-gradient(90deg,#004899 50.5px,#002f99 156.5px,#471c99 227.5px,#990699 303.5px,#990084 324.5px,#907 341.5px,#99005c 388.5px,#990046 447.5px,#990035 522.5px)"></i>
<i style="top:204px;background:linear-gradient(90deg,#004699 51.5px,#002d99 157.5px,#491a99 230.5px,#990599 305.5px,#908 322.5px,#990078 342.5px,#99005d 389.5px,#990048 447.5px,#990036 520.5px)"></i>
<i style="top:206px;background:linear-gradient(90deg,#004599 52.5px,#002c99 157.5px,#491999 231.5px,#990499 307.5px,#99008b 320.5px,#990078 344.5px,#99005e 390.5px,#990049 447.5px,#990038 518.5px)"></i>
<i style="top:208px;background:linear-gradient(90deg,#004399 53.5px,#002b99 157.5px,#471899 231.5px,#990399 309.5px,#99008e 319.5px,#990078 346.5px,#99005e 391.5px,#99004a 447.5px,#990039 516.5px)"></i>
<i style="top:210px;background:linear-gradient(90deg,#004299 54.5px,#002a99 158.5px,#491799 234.5px,#990199 311.5px,#990079 347.5px,#99005f 392.5px,#99004b 447.5px,#99003a 514.5px)"></i>
<i style="top:212px;background:linear-gradient(90deg,#004199 55.5px,#002999 158.5px,#491699 235.5px,#909 313.5px,#990079 349.5px,#990061 392.5px,#99004c 446.5px,#99003b 512.5px)"></i>
<i style="top:214px;background:linear-gradient(90deg,#003f99 56.5px,#002899 158.5px,#481599 235.5px,#909 315.5px,#99007a 350.5px,#990062 393.5px,#99004d 446.5px,#99003d 510.5px)"></i>
<i style="top:216px;background:linear-gradient(90deg,#003e99 57.5px,#002799 159.5px,#491499 237.5px,#920099 310.5px,#909 317.5px,#99007b 352.5px,#990062 394.5px,#99004f 445.5px,#99003e 508.5px)"></i>
<i style="top:218px;background:linear-gradient(90deg,#003c99 58.5px,#002699 159.5px,#491399 238.5px,#8e0099 308.5px,#909 319.5px,#99007b 354.5px,#990063 395.5px,#990050 445.5px,#99003f 506.5px)"></i>
<i style="top:220px;background:linear-gradient(90deg,#003b99 59.5px,#002599 159.5px,#431399 233.5px,#8a0099 306.5px,#909 321.5px,#99007c 355.5px,#990064 396.5px,#990051 445.5px,#990041 504.5px)"></i>
<i style="top:222px;background:linear-gradient(90deg,#003a99 60.5px,#002499 160.5px,#421299 233.5px,#860099 304.5px,#909 323.5px,#99007d 356.5px,#906 396.5px,#990052 444.5px,#990042 502.5px)"></i>
<i style="top:224px;background:linear-gradient(90deg,#003899 62.5px,#002399 160.5px,#401299 232.5px,#820099 302.5px,#909 325.5px,#99007d 358.5px,#906 397.5px,#990053 444.5px,#990043 501.5px)"></i>
<i style="top:226px;background:linear-gradient(90deg,#003799 63.5px,#029 160.5px,#3e1299 231.5px,#7f0099 300.5px,#909 327.5px,#99007d 360.5px,#990067 398.5px,#990054 444.5px,#904 499.5px)"></i>
<i style="top:228px;background:linear-gradient(90deg,#003699 64.5px,#002199 161.5px,#3d1199 231.5px,#7b0099 298.5px,#909 329.5px,#99007e 361.5px,#990068 399.5px,#905 444.5px,#990046 497.5px)"></i>
<i style="top:230px;background:linear-gradient(90deg,#003599 65.5px,#002099 161.5px,#3b1099 230.5px,#780099 296.5px,#909 331.5px,#99007f 363.5px,#990069 400.5px,#990057 444.5px,#990047 495.5px)"></i>
<i style="top:232px;background:linear-gradient(90deg,#003499 66.5px,#002099 161.5px,#391099 228.5px,#740099 294.5px,#909 333.5px,#99007f 364.5px,#99006a 400.5px,#990058 443.5px,#990049 493.5px)"></i>
<i style="top:234px;background:linear-gradient(90deg,#039 67.5px,#001f99 162.5px,#381099 228.5px,#710099 292.5px,#909 335.5px,#990080 366.5px,#99006b 401.5px,#990059 442.5px,#99004a 491.5px)"></i>
<i style="top:236px;background:linear-gradient(90deg,#003299 68.5px,#001e99 162.5px,#360f99 227.5px,#6e0099 290.5px,#909 337.5px,#990081 367.5px,#99006c 401.5px,#99005b 442.5px,#99004c 489.5px)"></i>
<i style="top:238px;background:linear-gradient(90deg,#003099 69.5px,#001d99 162.5px,#6a0099 288.5px,#909 339.5px,#990081 369.5px,#99006d 402.5px,#99005c 441.5px,#99004d 487.5px)"></i>
<i style="top:240px;background:linear-gradient(90deg,#002f99 70.5px,#011c99 163.5px,#670099 286.5px,#909 341.5px,#990082 370.5px,#99006e 403.5px,#99005d 441.5px,#99004f 485.5px)"></i>
<i style="top:242px;background:linear-gradient(90deg,#002e99 72.5px,#001b99 163.5px,#650099 285.5px,#909 343.5px,#990083 371.5px,#99006f 403.5px,#99005f 440.5px,#990050 483.5px)"></i>
<i style="top:244px;background:linear-gradient(90deg,#002d99 73.5px,#001b99 163.5px,#620099 283.5px,#909 345.5px,#990083 373.5px,#990070 404.5px,#990060 440.5px,#990052 481.5px)"></i>
<i style="top:246px;background:linear-gradient(90deg,#002c99 74.5px,#011a99 164.5px,#5f0099 281.5px,#909 347.5px,#990084 374.5px,#990072 404.5px,#990061 439.5px,#990053 479.5px)"></i>
<i style="top:248px;background:linear-gradient(90deg,#002b99 75.5px,#001999 164.5px,#5c0099 279.5px,#909 349.5px,#990084 376.5px,#990072 405.5px,#990063 439.5px,#905 477.5px)"></i>
<i style="top:250px;background:linear-gradient(90deg,#002a99 76.5px,#001999 164.5px,#590099 277.5px,#909 351.5px,#990085 377.5px,#990073 406.5px,#990064 438.5px,#990057 475.5px)"></i>
<i style="top:252px;background:linear-gradient(90deg,#002999 77.5px,#011899 165.5px,#570099 275.5px,#909 353.5px,#990085 378.5px,#990074 406.5px,#906 437.5px,#990058 473.5px)"></i>
<i style="top:254px;background:linear-gradient(90deg,#002899 78.5px,#001799 165.5px,#540099 273.5px,#909 355.5px,#990086 380.5px,#990075 407.5px,#99005a 471.5px)"></i>
<i style="top:256px;background:linear-gradient(90deg,#002799 80.5px,#001699 165.5px,#510099 271.5px,#909 357.5px,#990086 381.5px,#907 407.5px,#99005c 469.5px)"></i>
<i style="top:258px;background:linear-gradient(90deg,#002699 81.5px,#011699 166.5px,#4f0099 269.5px,#980099 358.5px,#907 408.5px,#99005d 467.5px)"></i>
<i style="top:260px;background:linear-gradient(90deg,#002599 82.5px,#001599 166.5px,#4c0099 267.5px,#980099 360.5px,#990078 409.5px,#99005f 465.5px)"></i>
<i style="top:262px;background:linear-gradient(90deg,#002499 83.5px,#001499 166.5px,#4a0099 265.5px,#980099 362.5px,#99007a 409.5px,#990061 463.5px)"></i>
<i style="top:264px;background:linear-gradient(90deg,#002399 84.5px,#011499 167.5px,#470099 263.5px,#980099 364.5px,#99007a 410.5px,#990062 462.5px)"></i>
<i style="top:266px;background:linear-gradient(90deg,#029 86.5px,#001399 167.5px,#450099 261.5px,#980099 366.5px,#99007c 410.5px,#990064 460.5px)"></i>
<i style="top:268px;background:linear-gradient(90deg,#029 87.5px,#001399 167.5px,#430099 259.5px,#980099 368.5px,#99007c 411.5px,#906 458.5px)"></i>
<i style="top:270px;background:linear-gradient(90deg,#002199 88.5px,#011299 168.5px,#400099 257.5px,#980099 370.5px,#99007e 411.5px,#990068 456.5px)"></i>
<i style="top:272px;background:linear-gradient(90deg,#002099 89.5px,#019 168.5px,#3f0099 256.5px,#980099 372.5px,#99007e 412.5px,#99006a 454.5px)"></i>
<i style="top:274px;background:linear-gradient(90deg,#001f99 90.5px,#019 168.5px,#3d0099 254.5px,#980099 374.5px,#990080 412.5px,#99006c 452.5px)"></i>
<i style="top:276px;background:linear-gradient(90deg,#001e99 92.5px,#001099 168.5px,#3a0099 252.5px,#980099 376.5px,#990081 413.5px,#99006e 450.5px)"></i>
<i style="top:278px;background:linear-gradient(90deg,#001d99 93.5px,#001099 169.5px,#380099 250.5px,#980099 378.5px,#990082 413.5px,#990070 448.5px)"></i>
<i style="top:280px;background:linear-gradient(90deg,#001d99 94.5px,#000f99 169.5px,#360099 248.5px,#909 381.5px,#990084 412.5px,#990072 446.5px)"></i>
<i style="top:282px;background:linear-gradient(90deg,#001c99 95.5px,#000f99 169.5px,#340099 246.5px,#909 383.5px,#990085 412.5px,#990074 444.5px)"></i>
<i style="top:284px;background:linear-gradient(90deg,#001b99 96.5px,#000e99 170.5px,#320099 244.5px,#909 385.5px,#990086 413.5px,#990076 442.5px)"></i>
<i style="top:286px;background:linear-gradient(90deg,#001a99 98.5px,#000d99 170.5px,#300099 242.5px,#909 387.5px,#990087 413.5px,#990078 440.5px)"></i>
<i style="top:288px;background:linear-gradient(90deg,#001999 99.5px,#000d99 170.5px,#2e0099 240.5px,#909 389.5px,#99007b 438.5px)"></i>
<i style="top:290px;background:linear-gradient(90deg,#001999 100.5px,#000c99 171.5px,#2c0099 238.5px,#909 391.5px,#99007d 436.5px)"></i>
<i style="top:292px;background:linear-gradient(90deg,#001899 101.5px,#000c99 171.5px,#2a0099 236.5px,#909 393.5px,#99007f 434.5px)"></i>
<i style="top:294px;background:linear-gradient(90deg,#001799 103.5px,#000b99 171.5px,#280099 234.5px,#5f0099 314.5px,#909 395.5px,#990082 432.5px)"></i>
<i style="top:296px;background:linear-gradient(90deg,#001699 104.5px,#000b99 172.5px,#270099 232.5px,#5e0099 314.5px,#909 397.5px,#990084 430.5px)"></i>
<i style="top:298px;background:linear-gradient(90deg,#001699 105.5px,#000a99 172.5px,#250099 230.5px,#5d0099 314.5px,#909 399.5px,#990086 428.5px)"></i>
<i style="top:300px;background:linear-gradient(90deg,#001599 107.5px,#000a99 172.5px,#230099 228.5px,#5c0099 315.5px,#909 401.5px,#990089 426.5px)"></i>
<i style="top:302px;background:linear-gradient(90deg,#001499 108.5px,#000999 173.5px,#209 227.5px,#5b0099 315.5px,#909 403.5px,#99008b 425.5px)"></i>
<i style="top:304px;background:linear-gradient(90deg,#001499 109.5px,#000999 173.5px,#200099 225.5px,#5b0099 316.5px,#980099 404.5px,#99008d 423.5px)"></i>
<i style="top:306px;background:linear-gradient(90deg,#001399 110.5px,#000999 173.5px,#1f0099 223.5px,#5a0099 316.5px,#980099 406.5px,#990090 421.5px)"></i>
<i style="top:308px;background:linear-gradient(90deg,#001299 112.5px,#000899 174.5px,#1d0099 221.5px,#590099 316.5px,#980099 408.5px,#990092 419.5px)"></i>
<i style="top:310px;background:linear-gradient(90deg,#001299 113.5px,#000899 174.5px,#1b0099 219.5px,#590099 316.5px,#980099 410.5px,#990095 417.5px)"></i>
<i style="top:312px;background:linear-gradient(90deg,#019 114.5px,#000799 174.5px,#1a0099 217.5px,#500099 304.5px,#990098 415.5px)"></i>
<i style="top:314px;background:linear-gradient(90deg,#001099 116.5px,#000799 175.5px,#180099 215.5px,#570099 316.5px,#970099 413.5px)"></i>
<i style="top:316px;background:linear-gradient(90deg,#001099 117.5px,#000699 175.5px,#170099 213.5px,#509 314.5px,#950099 411.5px)"></i>
<i style="top:318px;background:linear-gradient(90deg,#000f99 118.5px,#000699 175.5px,#150099 211.5px,#530099 312.5px,#920099 409.5px)"></i>
<i style="top:320px;background:linear-gradient(90deg,#000e99 120.5px,#000599 176.5px,#130099 209.5px,#510099 310.5px,#8f0099 407.5px)"></i>
<i style="top:322px;background:linear-gradient(90deg,#000e99 121.5px,#000599 176.5px,#120099 207.5px,#4f0099 308.5px,#8d0099 405.5px)"></i>
<i style="top:324px;background:linear-gradient(90deg,#000d99 122.5px,#000599 176.5px,#109 205.5px,#4d0099 306.5px,#8a0099 403.5px)"></i>
<i style="top:326px;background:linear-gradient(90deg,#000c99 124.5px,#000499 177.5px,#0f0099 203.5px,#4b0099 304.5px,#809 401.5px)"></i>
<i style="top:328px;background:linear-gradient(90deg,#000c99 125.5px,#000499 177.5px,#0e0099 201.5px,#490099 302.5px,#850099 399.5px)"></i>
<i style="top:330px;background:linear-gradient(90deg,#000b99 127.5px,#000399 177.5px,#0c0099 199.5px,#470099 300.5px,#830099 397.5px)"></i>
<i style="top:332px;background:linear-gradient(90deg,#000b99 128.5px,#000399 178.5px,#0b0099 197.5px,#450099 298.5px,#800099 395.5px)"></i>
<i style="top:334px;background:linear-gradient(90deg,#000a99 129.5px,#000399 178.5px,#0a0099 195.5px,#430099 296.5px,#7e0099 393.5px)"></i>
<i style="top:336px;background:linear-gradient(90deg,#000a99 131.5px,#000299 178.5px,#080099 193.5px,#410099 294.5px,#7c0099 391.5px)"></i>
<i style="top:338px;background:linear-gradient(90deg,#000999 132.5px,#000299 179.5px,#3c0099 286.5px,#790099 389.5px)"></i>
<i style="top:340px;background:linear-gradient(90deg,#000899 134.5px,#000299 179.5px,#3b0099 285.5px,#780099 388.5px)"></i>
<i style="top:342px;background:linear-gradient(90deg,#000899 135.5px,#000199 179.5px,#3a0099 284.5px,#760099 386.5px)"></i>
<i style="top:344px;background:linear-gradient(90deg,#000799 137.5px,#000199 180.5px,#390099 284.5px,#730099 384.5px)"></i>
<i style="top:346px;background:linear-gradient(90deg,#000799 138.5px,#009 180.5px,#380099 283.5px,#710099 382.5px)"></i>
<i style="top:348px;background:linear-gradient(90deg,#000699 140.5px,#009 180.5px,#370099 282.5px,#6f0099 380.5px)"></i>
<i style="top:350px;background:linear-gradient(90deg,#000699 141.5px,#009 181.5px,#360099 281.5px,#6d0099 378.5px)"></i>
<i style="top:352px;background:linear-gradient(90deg,#000599 143.5px,#009 181.5px,#6b0099 376.5px)"></i>
<i style="top:354px;background:linear-gradient(90deg,#000599 144.5px,#009 181.5px,#690099 374.5px)"></i>
<i style="top:356px;background:linear-gradient(90deg,#000499 146.5px,#009 182.5px,#670099 372.5px)"></i>
<i style="top:358px;background:linear-gradient(90deg,#000399 147.5px,#009 182.5px,#650099 370.5px)"></i>
<i style="top:360px;background:linear-gradient(90deg,#000399 149.5px,#009 182.5px,#630099 368.5px)"></i>
<i style="top:362px;background:linear-gradient(90deg,#000299 150.5px,#009 183.5px,#610099 366.5px)"></i>
<i style="top:364px;background:linear-gradient(90deg,#000299 152.5px,#009 183.5px,#5f0099 364.5px)"></i>
<i style="top:366px;background:linear-gradient(90deg,#000199 154.5px,#009 183.5px,#5d0099 362.5px)"></i>
<i style="top:368px;background:linear-gradient(90deg,#000199 155.5px,#009 184.5px,#5b0099 360.5px)"></i>
<i style="top:370px;background:linear-gradient(90deg,#009 157.5px,#009 184.5px,#5a0099 358.5px)"></i>
<i style="top:372px;background:linear-gradient(90deg,#009 159.5px,#009 184.5px,#580099 356.5px)"></i>
<i style="top:374px;background:linear-gradient(90deg,#009 160.5px,#009 184.5px,#560099 354.5px)"></i>
<i style="top:376px;background:linear-gradient(90deg,#009 162.5px,#009 185.5px,#540099 352.5px)"></i>
<i style="top:378px;background:linear-gradient(90deg,#009 164.5px,#009 185.5px,#530099 350.5px)"></i>
<i style="top:380px;background:linear-gradient(90deg,#009 165.5px,#009 185.5px,#510099 349.5px)"></i>
<i style="top:382px;background:linear-gradient(90deg,#009 167.5px,#009 186.5px,#500099 347.5px)"></i>
<i style="top:384px;background:linear-gradient(90deg,#009 169.5px,#009 186.5px,#4e0099 345.5px)"></i>
<i style="top:386px;background:linear-gradient(90deg,#009 171.5px,#009 187.5px,#4c0099 343.5px)"></i>
<i style="top:388px;background:linear-gradient(90deg,#009 172.5px,#009 187.5px,#4b0099 341.5px)"></i>
<i style="top:390px;background:linear-gradient(90deg,#009 174.5px,#009 187.5px,#490099 339.5px)"></i>
<i style="top:392px;background:linear-gradient(90deg,#009 176.5px,#009 188.5px,#480099 337.5px)"></i>
<i style="top:394px;background:linear-gradient(90deg,#009 178.5px,#009 188.5px,#460099 335.5px)"></i>
<i style="top:396px;background:linear-gradient(90deg,#009 180.5px,#009 188.5px,#450099 333.5px)"></i>
<i style="top:398px;background:linear-gradient(90deg,#009 182.5px,#009 189.5px,#430099 331.5px)"></i>
<i style="top:400px;background:linear-gradient(90deg,#009 184.5px,#060099 201.5px,#420099 329.5px)"></i>
<i style="top:402px;background:linear-gradient(90deg,#009 186.5px,#400099 327.5px)"></i>
<i style="top:404px;background:linear-gradient(90deg,#009 188.5px,#3f0099 325.5px)"></i>
<i style="top:406px;background:linear-gradient(90deg,#009 190.5px,#3d0099 323.5px)"></i>
<i style="top:408px;background:linear-gradient(90deg,#010099 192.5px,#3c0099 321.5px)"></i>
<i style="top:410px;background:linear-gradient(90deg,#020099 194.5px,#3a0099 319.5px)"></i>
<i style="top:412px;background:linear-gradient(90deg,#030099 196.5px,#390099 317.5px)"></i>
<i style="top:414px;background:linear-gradient(90deg,#040099 199.5px,#380099 315.5px)"></i>
<i style="top:416px;background:linear-gradient(90deg,#040099 201.5px,#360099 313.5px)"></i>
<i style="top:418px;background:linear-gradient(90deg,#050099 203.5px,#350099 312.5px)"></i>
<i style="top:420px;background:linear-gradient(90deg,#060099 206.5px,#340099 310.5px)"></i>
<i style="top:422px;background:linear-gradient(90deg,#070099 208.5px,#309 308.5px)"></i>
<i style="top:424px;background:linear-gradient(90deg,#080099 210.5px,#310099 306.5px)"></i>
<i style="top:426px;background:linear-gradient(90deg,#090099 213.5px,#300099 304.5px)"></i>
<i style="top:428px;background:linear-gradient(90deg,#090099 215.5px,#2f0099 302.5px)"></i>
<i style="top:430px;background:linear-gradient(90deg,#0a0099 217.5px,#2e0099 300.5px)"></i>
<i style="top:432px;background:linear-gradient(90deg,#0b0099 220.5px,#2c0099 298.5px)"></i>
<i style="top:434px;background:linear-gradient(90deg,#0c0099 222.5px,#2b0099 296.5px)"></i>
<i style="top:436px;background:linear-gradient(90deg,#0d0099 225.5px,#2a0099 294.5px)"></i>
<i style="top:438px;background:linear-gradient(90deg,#0d0099 227.5px,#290099 292.5px)"></i>
<i style="top:440px;background:linear-gradient(90deg,#0e0099 230.5px,#270099 290.5px)"></i>
<i style="top:442px;background:linear-gradient(90deg,#0f0099 232.5px,#260099 288.5px)"></i>
<i style="top:444px;background:linear-gradient(90deg,#100099 234.5px,#250099 286.5px)"></i>
<i style="top:446px;background:linear-gradient(90deg,#109 237.5px,#240099 284.5px)"></i>
<i style="top:448px;background:linear-gradient(90deg,#109 239.5px,#230099 282.5px)"></i>
<i style="top:450px;background:linear-gradient(90deg,#120099 241.5px,#209 280.5px)"></i>
<i style="top:452px;background:linear-gradient(90deg,#130099 244.5px,#210099 278.5px)"></i>
<i style="top:454px;background:linear-gradient(90deg,#130099 246.5px,#200099 276.5px)"></i>
<i style="top:456px;background:linear-gradient(90deg,#140099 249.5px,#1e0099 274.5px)"></i>
<i style="top:458px;background:linear-gradient(90deg,#150099 251.5px,#1e0099 273.5px)"></i>
<i style="top:460px;background:linear-gradient(90deg,#160099 254.5px,#1d0099 271.5px)"></i>
<i style="top:462px;background:linear-gradient(90deg,#170099 257.5px,#1b0099 268.5px)"></i>
</div>
<div class="cie" style="left:1008px;top:77px;width:618px;height:476px;clip-path:polygon(511.0px 58.6px,101.4px 17.3px,180.5px 349.9px)">
<i style="top:16px;background:linear-gradient(90deg,#0f0 99.5px,#0f0 106.5px)"></i>
<i style="top:18px;background:linear-gradient(90deg,#0f0 99.5px,#0f0 126.5px)"></i>
<i style="top:20px;background:linear-gradient(90deg,#0f0 100.5px,#01ff00 127.5px,#30ff00 146.5px)"></i>
<i style="top:22px;background:linear-gradient(90deg,#0f0 100.5px,#0f0 127.5px,#32ff00 147.5px,#67ff00 166.5px)"></i>
<i style="top:24px;background:linear-gradient(90deg,#0f0 101.5px,#02ff00 128.5px,#27ff00 143.5px,#50ff00 158.5px,#79ff00 172.5px,#a6ff00 186.5px)"></i>
<i style="top:26px;background:linear-gradient(90deg,#00ff01 101.5px,#01ff00 128.5px,#36ff00 149.5px,#6fff00 169.5px,#adff00 188.5px,#ef0 206.5px)"></i>
<i style="top:28px;background:linear-gradient(90deg,#00ff05 102.5px,#0f0 128.5px,#3bff00 151.5px,#79ff00 172.5px,#bf0 192.5px,#ff0 210.5px,#ffe500 217.5px,#fc0 225.5px)"></i>
<i style="top:30px;background:linear-gradient(90deg,#00ff09 102.5px,#02ff04 129.5px,#3bff00 151.5px,#78ff00 172.5px,#b8ff00 191.5px,#ff0 210.5px,#ffe100 218.5px,#ffc900 226.5px,#ffb200 235.5px,#ff9c00 245.5px)"></i>
<i style="top:32px;background:linear-gradient(90deg,#00ff0d 102.5px,#01ff08 129.5px,#3aff04 151.5px,#75ff00 171.5px,#b8ff00 191.5px,#fcff00 209.5px,#fffe00 210.5px,#ffd400 222.5px,#ffb300 234.5px,#ff9400 249.5px,#ff7a00 265.5px)"></i>
<i style="top:34px;background:linear-gradient(90deg,#0f1 103.5px,#00ff0d 129.5px,#3aff09 151.5px,#75ff04 171.5px,#b1ff01 189.5px,#fdff00 209.5px,#fffd00 210.5px,#ffe300 217.5px,#ffcd00 224.5px,#ffb700 232.5px,#ffa300 241.5px,#ff7f00 261.5px,#ff6000 285.5px)"></i>
<i style="top:36px;background:linear-gradient(90deg,#00ff16 103.5px,#00ff12 129.5px,#02ff11 130.5px,#39ff0e 151.5px,#75ff0a 171.5px,#aeff06 188.5px,#feff01 209.5px,#fffc01 210.5px,#ffdf00 218.5px,#ffc400 227.5px,#ffab00 237.5px,#ff9400 248.5px,#ff8000 260.5px,#ff6c00 274.5px,#ff4c00 305.5px)"></i>
<i style="top:38px;background:linear-gradient(90deg,#00ff1a 104.5px,#01ff16 130.5px,#3bff13 152.5px,#78ff0f 172.5px,#b9ff0b 191.5px,#feff06 209.5px,#ffdb03 219.5px,#ffbd01 229.5px,#ffa100 241.5px,#ff8900 254.5px,#ff7200 269.5px,#ff5e00 286.5px,#ff4c00 304.5px,#ff3c00 325.5px)"></i>
<i style="top:40px;background:linear-gradient(90deg,#00ff1e 104.5px,#00ff1b 130.5px,#3bff18 152.5px,#78ff14 172.5px,#b9ff10 191.5px,#ffff0c 209.5px,#ffda09 219.5px,#ffb705 231.5px,#ff9802 245.5px,#ff7e00 260.5px,#ff6700 277.5px,#ff5200 297.5px,#ff4000 319.5px,#ff3000 344.5px)"></i>
<i style="top:42px;background:linear-gradient(90deg,#00ff23 105.5px,#00ff20 130.5px,#02ff20 131.5px,#3aff1d 152.5px,#77ff1a 172.5px,#b5ff16 190.5px,#fffe13 209.5px,#ffd30d 221.5px,#ffaf09 234.5px,#ff9005 249.5px,#ff7401 266.5px,#ff5c00 286.5px,#ff4800 308.5px,#ff3500 334.5px,#ff2500 364.5px)"></i>
<i style="top:44px;background:linear-gradient(90deg,#00ff27 105.5px,#01ff25 131.5px,#3aff22 152.5px,#74ff1f 171.5px,#b2ff1c 189.5px,#fdff19 208.5px,#fffd19 209.5px,#ffe615 215.5px,#ffcf12 222.5px,#ffaa0d 236.5px,#ff8808 253.5px,#ff6c04 272.5px,#ff5301 294.5px,#ff3e00 320.5px,#ff2b00 350.5px,#ff1c00 384.5px)"></i>
<i style="top:46px;background:linear-gradient(90deg,#00ff2c 106.5px,#00ff29 131.5px,#39ff27 152.5px,#74ff25 171.5px,#afff22 188.5px,#fdff1f 208.5px,#fffc1f 209.5px,#ffe51b 215.5px,#ffce17 222.5px,#ffb714 230.5px,#ffa410 238.5px,#ff820b 256.5px,#ff6506 277.5px,#ff4b02 302.5px,#ff3600 331.5px,#ff2300 365.5px,#ff1400 404.5px)"></i>
<i style="top:48px;background:linear-gradient(90deg,#00ff31 106.5px,#00ff2f 131.5px,#02ff2e 132.5px,#39ff2d 152.5px,#74ff2b 171.5px,#b6ff28 190.5px,#feff26 208.5px,#fffc25 209.5px,#ffe120 216.5px,#ffca1c 223.5px,#ffb418 231.5px,#ff9f14 240.5px,#ff7c0e 259.5px,#ff5e08 282.5px,#ff4504 309.5px,#ff2f00 341.5px,#ff1c00 379.5px,#ff0d00 424.5px)"></i>
<i style="top:50px;background:linear-gradient(90deg,#00ff35 107.5px,#01ff34 132.5px,#3bff32 153.5px,#77ff30 172.5px,#baff2e 191.5px,#ffff2c 208.5px,#ffe427 215.5px,#ffc921 223.5px,#ffb31d 231.5px,#ff9e19 240.5px,#ff8b15 250.5px,#ff7911 261.5px,#ff590b 286.5px,#ff3f05 316.5px,#ff2901 351.5px,#ff1700 393.5px,#ff0700 444.5px)"></i>
<i style="top:52px;background:linear-gradient(90deg,#00ff3a 107.5px,#00ff39 132.5px,#3bff37 153.5px,#77ff36 172.5px,#b7ff34 190.5px,#fffe33 208.5px,#ffe32d 215.5px,#ffc827 223.5px,#ffb021 232.5px,#ff991c 242.5px,#ff8418 253.5px,#ff7314 264.5px,#ff530d 291.5px,#ff3907 323.5px,#ff2302 361.5px,#f10 407.5px,#ff0200 463.5px)"></i>
<i style="top:54px;background:linear-gradient(90deg,#00ff3f 108.5px,#00ff3e 132.5px,#02ff3e 133.5px,#3aff3d 153.5px,#76ff3c 172.5px,#b3ff3b 189.5px,#fffd39 208.5px,#ffde32 216.5px,#ffc42b 224.5px,#ffaa25 234.5px,#ff9420 244.5px,#ff801b 255.5px,#ff6d16 268.5px,#ff4e0f 296.5px,#ff3208 332.5px,#ff1c02 376.5px,#ff0700 439.5px,#f00 469.5px,#f00 483.5px)"></i>
<i style="top:56px;background:linear-gradient(90deg,#0f4 108.5px,#01ff43 133.5px,#3aff42 153.5px,#76ff42 172.5px,#b0ff41 188.5px,#fdff40 207.5px,#fffd40 208.5px,#ffdd37 216.5px,#ffc130 225.5px,#ffa729 235.5px,#ff8f23 246.5px,#ff7b1d 258.5px,#ff6819 271.5px,#ff5714 286.5px,#ff4810 302.5px,#ff2b09 343.5px,#ff1402 395.5px,#f00 466.5px,#f00 503.5px)"></i>
<i style="top:58px;background:linear-gradient(90deg,#00ff49 109.5px,#00ff48 133.5px,#39ff48 153.5px,#73ff48 171.5px,#acff48 187.5px,#feff47 207.5px,#fffc46 208.5px,#ffdd3d 216.5px,#ffc035 225.5px,#ffa62e 235.5px,#ff8d27 247.5px,#ff7821 259.5px,#ff651b 273.5px,#ff5417 288.5px,#ff4412 305.5px,#ff350e 326.5px,#ff280a 349.5px,#ff1003 405.5px,#f00 465.5px,#f00 513.5px)"></i>
<i style="top:60px;background:linear-gradient(90deg,#00ff4e 109.5px,#00ff4e 133.5px,#02ff4e 134.5px,#3bff4e 154.5px,#79ff4e 173.5px,#bcff4e 191.5px,#ffff4e 207.5px,#ffdf44 215.5px,#ffc23b 224.5px,#ffa733 234.5px,#ff902c 245.5px,#ff7b26 257.5px,#ff6720 271.5px,#ff551a 286.5px,#ff4515 303.5px,#ff3611 324.5px,#ff280c 347.5px,#ff1005 403.5px,#f00 463.5px,#f00 511.5px)"></i>
<i style="top:62px;background:linear-gradient(90deg,#00ff53 110.5px,#01ff53 134.5px,#3bff54 154.5px,#79ff54 173.5px,#b8ff55 190.5px,#ff5 207.5px,#ffde4b 215.5px,#ffc141 224.5px,#ffa638 234.5px,#ff8f30 245.5px,#ff7a2a 257.5px,#ff6623 271.5px,#ff551d 286.5px,#ff4518 303.5px,#ff3513 324.5px,#ff270f 347.5px,#ff1007 402.5px,#ff0002 461.5px,#f00 509.5px)"></i>
<i style="top:64px;background:linear-gradient(90deg,#00ff58 110.5px,#00ff59 134.5px,#3aff5a 154.5px,#75ff5b 172.5px,#b4ff5b 189.5px,#fffe5c 207.5px,#ffdd51 215.5px,#ffc046 224.5px,#ffa53d 234.5px,#ff8e35 245.5px,#ff792e 257.5px,#ff6527 271.5px,#ff5421 286.5px,#ff451b 302.5px,#ff3516 323.5px,#ff2711 346.5px,#ff1009 401.5px,#ff0003 459.5px,#f00 507.5px)"></i>
<i style="top:66px;background:linear-gradient(90deg,#00ff5d 111.5px,#00ff5f 134.5px,#02ff5f 135.5px,#3aff60 154.5px,#75ff61 172.5px,#b1ff62 188.5px,#fdff64 206.5px,#fffd63 207.5px,#ffdd57 215.5px,#ffbf4c 224.5px,#ffa542 234.5px,#ff8d39 245.5px,#ff7832 257.5px,#ff642a 271.5px,#ff5324 286.5px,#ff441e 302.5px,#ff3519 322.5px,#ff2714 345.5px,#ff100b 400.5px,#ff0005 457.5px,#ff0002 505.5px)"></i>
<i style="top:68px;background:linear-gradient(90deg,#00ff63 111.5px,#01ff64 135.5px,#39ff66 154.5px,#75ff67 172.5px,#adff69 187.5px,#fdff6b 206.5px,#fffc6a 207.5px,#ffdc5d 215.5px,#ffbe52 224.5px,#ffa648 233.5px,#ff8e3f 244.5px,#ff7936 256.5px,#ff652e 270.5px,#ff5327 285.5px,#f42 301.5px,#ff351c 321.5px,#ff2716 344.5px,#ff100d 398.5px,#ff0007 455.5px,#ff0003 502.5px)"></i>
<i style="top:70px;background:linear-gradient(90deg,#00ff68 112.5px,#01ff6a 135.5px,#39ff6c 154.5px,#71ff6e 171.5px,#b5ff70 189.5px,#feff72 206.5px,#fffb71 207.5px,#ffdb63 215.5px,#ffbd57 224.5px,#ffa54d 233.5px,#ff8d43 244.5px,#ff783a 256.5px,#ff6532 269.5px,#ff542b 284.5px,#ff4425 300.5px,#ff351e 320.5px,#ff2719 343.5px,#ff100f 397.5px,#ff0008 453.5px,#ff0004 500.5px)"></i>
<i style="top:72px;background:linear-gradient(90deg,#00ff6e 112.5px,#00ff70 135.5px,#02ff70 136.5px,#3bff72 155.5px,#78ff75 173.5px,#b9ff77 190.5px,#ffff7a 206.5px,#ffde6b 214.5px,#ffbf5e 223.5px,#ffa753 232.5px,#ff8e49 243.5px,#ff793f 255.5px,#ff6637 268.5px,#ff552f 282.5px,#ff4529 298.5px,#ff3622 318.5px,#ff281c 340.5px,#ff1011 394.5px,#ff000a 451.5px,#ff0006 498.5px)"></i>
<i style="top:74px;background:linear-gradient(90deg,#00ff73 112.5px,#02ff76 136.5px,#3bff79 155.5px,#78ff7c 173.5px,#b6ff7e 189.5px,#fffe81 206.5px,#ffdd72 214.5px,#ffbe64 223.5px,#ffa658 232.5px,#ff8d4d 243.5px,#ff7843 255.5px,#ff653a 268.5px,#ff5433 282.5px,#ff452c 298.5px,#ff3524 318.5px,#ff271e 340.5px,#ff1013 393.5px,#ff000c 449.5px,#ff0008 495.5px)"></i>
<i style="top:76px;background:linear-gradient(90deg,#00ff79 113.5px,#01ff7c 136.5px,#3aff7f 155.5px,#74ff82 172.5px,#b2ff85 188.5px,#fcff89 205.5px,#fffd89 206.5px,#ffdc78 214.5px,#ffc06b 222.5px,#ffa75f 231.5px,#ff8e53 242.5px,#ff7848 254.5px,#ff653f 267.5px,#ff5437 281.5px,#ff452f 297.5px,#ff3527 317.5px,#ff2721 339.5px,#ff1015 392.5px,#ff000e 447.5px,#ff0009 493.5px)"></i>
<i style="top:78px;background:linear-gradient(90deg,#00ff7e 113.5px,#00ff82 136.5px,#03ff82 137.5px,#39ff86 155.5px,#74ff89 172.5px,#aeff8d 187.5px,#fdff91 205.5px,#fffc90 206.5px,#ffdb7f 214.5px,#ffbf71 222.5px,#ffa664 231.5px,#ff8d58 242.5px,#ff784c 254.5px,#ff6443 267.5px,#ff543a 281.5px,#ff4432 297.5px,#ff342a 317.5px,#ff2723 339.5px,#ff1017 391.5px,#ff000f 445.5px,#ff000b 491.5px)"></i>
<i style="top:80px;background:linear-gradient(90deg,#00ff84 114.5px,#02ff89 137.5px,#39ff8c 155.5px,#74ff90 172.5px,#b6ff95 189.5px,#feff99 205.5px,#fffb98 206.5px,#ffda86 214.5px,#ffbf77 222.5px,#ffa56a 231.5px,#ff8c5c 242.5px,#ff7852 253.5px,#ff6547 266.5px,#ff543e 280.5px,#ff4436 296.5px,#ff342d 316.5px,#ff2726 338.5px,#ff1019 390.5px,#f01 443.5px,#ff000c 489.5px)"></i>
<i style="top:82px;background:linear-gradient(90deg,#00ff8a 114.5px,#01ff8f 137.5px,#3cff93 156.5px,#77ff98 173.5px,#b7ff9c 189.5px,#ffffa2 205.5px,#ffdd8e 213.5px,#ffc17f 221.5px,#ffa770 230.5px,#ff9063 240.5px,#ff7b58 251.5px,#ff674c 264.5px,#ff5543 278.5px,#ff453a 294.5px,#ff3631 313.5px,#ff2829 335.5px,#ff101c 386.5px,#ff0013 441.5px,#ff000e 486.5px)"></i>
<i style="top:84px;background:linear-gradient(90deg,#00ff90 115.5px,#00ff95 137.5px,#03ff95 138.5px,#3bff9a 156.5px,#77ff9f 173.5px,#b7ffa4 189.5px,#fffeaa 205.5px,#ffdc95 213.5px,#ffc085 221.5px,#ffa676 230.5px,#ff8f68 240.5px,#ff7a5c 251.5px,#ff6650 264.5px,#ff5446 278.5px,#ff453d 293.5px,#ff3634 312.5px,#ff272c 334.5px,#ff101e 385.5px,#ff0015 439.5px,#ff000f 484.5px)"></i>
<i style="top:86px;background:linear-gradient(90deg,#00ff96 115.5px,#00ff9c 137.5px,#02ff9c 138.5px,#3affa1 156.5px,#77ffa6 173.5px,#b3ffac 188.5px,#fcffb2 204.5px,#fffdb1 205.5px,#ffdb9c 213.5px,#ffbf8b 221.5px,#ffa57c 230.5px,#ff8e6d 240.5px,#ff7961 251.5px,#ff6554 264.5px,#ff544a 278.5px,#ff4441 293.5px,#ff3537 312.5px,#ff272f 333.5px,#ff1021 384.5px,#ff0017 437.5px,#f01 482.5px)"></i>
<i style="top:88px;background:linear-gradient(90deg,#00ff9d 116.5px,#01ffa2 138.5px,#3affa8 156.5px,#73ffad 172.5px,#afffb3 187.5px,#fdffbb 204.5px,#fffcb9 205.5px,#ffdaa3 213.5px,#ffbe91 221.5px,#ffa481 230.5px,#ff8d72 240.5px,#ff7865 251.5px,#ff6559 263.5px,#ff544e 277.5px,#ff4544 292.5px,#ff353a 311.5px,#ff2732 332.5px,#ff1023 383.5px,#ff0019 435.5px,#ff0013 480.5px)"></i>
<i style="top:90px;background:linear-gradient(90deg,#00ffa3 116.5px,#00ffa9 138.5px,#03ffa9 139.5px,#39ffaf 156.5px,#73ffb5 172.5px,#b8ffbc 189.5px,#feffc4 204.5px,#fffbc1 205.5px,#ffddad 212.5px,#ffc09a 220.5px,#ffa688 229.5px,#ff8e79 239.5px,#ff796b 250.5px,#ff665e 262.5px,#ff5452 276.5px,#ff4548 291.5px,#ff353e 310.5px,#ff2735 331.5px,#ff1025 381.5px,#ff001b 433.5px,#ff0014 477.5px)"></i>
<i style="top:92px;background:linear-gradient(90deg,#00ffa9 117.5px,#00ffb0 138.5px,#02ffb0 139.5px,#3cffb7 157.5px,#7affbe 174.5px,#b8ffc5 189.5px,#ffc 204.5px,#ffe0b7 211.5px,#ffc2a3 219.5px,#ffa790 228.5px,#ff8f7f 238.5px,#ff7a70 249.5px,#ff6663 261.5px,#ff5457 275.5px,#ff454c 290.5px,#ff3642 308.5px,#ff2838 329.5px,#ff1028 379.5px,#ff001d 431.5px,#ff0016 475.5px)"></i>
<i style="top:94px;background:linear-gradient(90deg,#00ffb0 117.5px,#01ffb7 139.5px,#3bffbe 157.5px,#76ffc5 173.5px,#b9ffcd 189.5px,#fffed5 204.5px,#ffdfbe 211.5px,#ffc1a9 219.5px,#ffa696 228.5px,#ff8e84 238.5px,#ff7975 249.5px,#ff6667 261.5px,#ff555b 274.5px,#ff4550 289.5px,#ff3645 307.5px,#ff283b 328.5px,#ff102a 378.5px,#ff001f 430.5px,#ff0018 473.5px)"></i>
<i style="top:96px;background:linear-gradient(90deg,#00ffb6 118.5px,#00ffbe 139.5px,#03ffbe 140.5px,#3bffc5 157.5px,#76ffcd 173.5px,#b4ffd5 188.5px,#fffedd 204.5px,#ffdec6 211.5px,#ffc0b0 219.5px,#ffa59c 228.5px,#ff8f8b 237.5px,#ff797b 248.5px,#ff666d 260.5px,#ff5560 273.5px,#ff4554 288.5px,#ff3649 306.5px,#ff273e 327.5px,#ff102d 376.5px,#ff0021 428.5px,#ff001a 470.5px)"></i>
<i style="top:98px;background:linear-gradient(90deg,#00ffbd 118.5px,#00ffc5 139.5px,#02ffc5 140.5px,#3affcd 157.5px,#76ffd5 173.5px,#b0ffdd 187.5px,#fcffe7 203.5px,#fffde6 204.5px,#ffddcd 211.5px,#ffbfb6 219.5px,#ffa4a2 228.5px,#ff8e91 237.5px,#ff7980 248.5px,#ff6571 260.5px,#ff5464 273.5px,#ff4457 288.5px,#ff354c 306.5px,#ff2741 327.5px,#ff102f 375.5px,#ff0023 426.5px,#ff001b 468.5px)"></i>
<i style="top:100px;background:linear-gradient(90deg,#00ffc4 119.5px,#01ffcd 140.5px,#36ffd4 156.5px,#71ffdd 172.5px,#acffe5 186.5px,#fdfff1 203.5px,#fffcee 204.5px,#ffdcd5 211.5px,#ffbebd 219.5px,#ffa3a8 228.5px,#ff8d96 237.5px,#ff7986 247.5px,#ff6676 259.5px,#ff5568 272.5px,#ff445c 287.5px,#ff354f 305.5px,#ff2744 325.5px,#ff1031 374.5px,#ff0025 424.5px,#ff001d 466.5px)"></i>
<i style="top:102px;background:linear-gradient(90deg,#00ffca 119.5px,#00ffd4 140.5px,#35ffdc 156.5px,#71ffe5 172.5px,#b5ffef 188.5px,#fefffb 203.5px,#fffbf7 204.5px,#ffdbdc 211.5px,#ffbdc4 219.5px,#ffa2ae 228.5px,#ff8c9b 237.5px,#ff788b 247.5px,#ff657b 259.5px,#ff546c 272.5px,#ff445f 287.5px,#ff3452 305.5px,#ff2747 325.5px,#ff0f34 373.5px,#ff0027 422.5px,#ff001f 464.5px)"></i>
<i style="top:104px;background:linear-gradient(90deg,#00ffd2 120.5px,#00ffdb 140.5px,#02ffdc 141.5px,#34ffe4 156.5px,#69ffec 170.5px,#9bfff4 182.5px,#d2fffd 194.5px,#fafaff 203.5px,#fff5fb 205.5px,#ffd6e1 212.5px,#ffb9c8 220.5px,#ff9fb1 229.5px,#ff899f 238.5px,#ff768e 248.5px,#ff627e 260.5px,#ff526f 273.5px,#ff4362 287.5px,#f35 305.5px,#ff264a 325.5px,#ff0f36 372.5px,#ff0029 420.5px,#ff0021 461.5px)"></i>
<i style="top:106px;background:linear-gradient(90deg,#00ffd9 120.5px,#01ffe3 141.5px,#4affef 162.5px,#9bfffd 182.5px,#b4fcff 188.5px,#faefff 205.5px,#ffeafc 207.5px,#ffcde1 214.5px,#ffb1c9 222.5px,#ff98b3 231.5px,#ff84a1 240.5px,#ff7190 250.5px,#ff5f7f 262.5px,#ff4064 289.5px,#ff254c 326.5px,#ff0e38 373.5px,#ff002b 418.5px,#ff0023 459.5px)"></i>
<i style="top:108px;background:linear-gradient(90deg,#00ffe0 121.5px,#00ffeb 141.5px,#37fff4 157.5px,#7cfdff 175.5px,#fae5ff 207.5px,#ffe0fc 209.5px,#ffc4e2 216.5px,#ffaaca 224.5px,#ff92b4 233.5px,#ff7fa2 242.5px,#ff6d92 252.5px,#ff5b81 264.5px,#ff3d66 291.5px,#ff234d 328.5px,#ff0d39 375.5px,#ff002e 416.5px,#ff0025 457.5px)"></i>
<i style="top:110px;background:linear-gradient(90deg,#00ffe7 121.5px,#00fff2 141.5px,#02fff3 142.5px,#4cfdff 163.5px,#a1ecff 186.5px,#fadbff 209.5px,#ffd6fc 211.5px,#ffbce3 218.5px,#ffa3cb 226.5px,#ff8db6 235.5px,#ff7aa4 244.5px,#ff6993 254.5px,#ff5783 266.5px,#ff3c69 292.5px,#ff2150 329.5px,#ff0c3b 376.5px,#ff0030 414.5px,#ff0027 455.5px)"></i>
<i style="top:112px;background:linear-gradient(90deg,#00ffef 122.5px,#01fffb 142.5px,#20fdff 151.5px,#4cf4ff 164.5px,#a3e3ff 188.5px,#fad1ff 211.5px,#ffcdfc 213.5px,#ffb4e3 220.5px,#ff9dcc 228.5px,#ff87b7 237.5px,#ff75a5 246.5px,#ff5485 268.5px,#ff396a 294.5px,#ff2051 331.5px,#ff0b3d 376.5px,#ff0032 412.5px,#ff0029 452.5px)"></i>
<i style="top:114px;background:linear-gradient(90deg,#00fff6 122.5px,#00fffd 133.5px,#00fbff 142.5px,#6ce5ff 174.5px,#b3d7ff 194.5px,#fac9ff 213.5px,#ffc5fc 215.5px,#ffade4 222.5px,#ff97cd 230.5px,#ff82b8 239.5px,#ff71a7 248.5px,#ff5186 270.5px,#ff376c 296.5px,#ff1e53 333.5px,#ff0a3f 378.5px,#ff0035 410.5px,#ff002b 450.5px)"></i>
<i style="top:116px;background:linear-gradient(90deg,#00fffd 122.5px,#00f4ff 142.5px,#02f3ff 143.5px,#6fddff 176.5px,#fac0ff 215.5px,#ffbcfc 217.5px,#ffa6e5 224.5px,#ff91ce 232.5px,#ff7db9 241.5px,#ff6ca8 250.5px,#ff4e89 271.5px,#ff356e 297.5px,#ff1d55 334.5px,#ff0940 379.5px,#ff0037 408.5px,#ff002d 448.5px)"></i>
<i style="top:118px;background:linear-gradient(90deg,#00f8ff 123.5px,#01ecff 143.5px,#6fd5ff 177.5px,#fab8ff 217.5px,#ffb4fc 219.5px,#ff9fe5 226.5px,#ff8bcf 234.5px,#ff69ab 251.5px,#ff4e8d 271.5px,#ff3673 295.5px,#ff1d59 331.5px,#ff0a44 376.5px,#ff0039 406.5px,#ff002f 446.5px)"></i>
<i style="top:120px;background:linear-gradient(90deg,#00f1ff 123.5px,#00e5ff 143.5px,#6eceff 178.5px,#fbb0ff 219.5px,#ffadfc 221.5px,#ff99e6 228.5px,#ff87d3 235.5px,#ff67ae 252.5px,#ff4b90 272.5px,#ff3476 296.5px,#ff1c5b 332.5px,#ff0946 376.5px,#ff003c 404.5px,#ff0031 443.5px)"></i>
<i style="top:122px;background:linear-gradient(90deg,#00eaff 124.5px,#00deff 143.5px,#02deff 144.5px,#6ec7ff 179.5px,#fba9ff 221.5px,#ffa6fc 223.5px,#ff92e6 230.5px,#ff82d3 237.5px,#ff63b0 254.5px,#ff4891 274.5px,#ff3278 297.5px,#ff1b5d 333.5px,#ff0848 377.5px,#ff003e 403.5px,#f03 441.5px)"></i>
<i style="top:124px;background:linear-gradient(90deg,#00e3ff 124.5px,#01d7ff 144.5px,#71bfff 181.5px,#fba2ff 223.5px,#ff9ffd 225.5px,#ff7cd4 239.5px,#ff5fb1 256.5px,#ff4593 276.5px,#ff307a 299.5px,#ff1a5f 334.5px,#ff0749 378.5px,#ff0041 401.5px,#ff0036 439.5px)"></i>
<i style="top:126px;background:linear-gradient(90deg,#0df 125.5px,#00d1ff 144.5px,#71b9ff 182.5px,#fb9bff 225.5px,#ff98fd 227.5px,#ff77d5 241.5px,#ff5bb2 258.5px,#ff4395 277.5px,#ff2e7c 300.5px,#ff1861 335.5px,#ff064b 378.5px,#ff0043 399.5px,#ff0038 436.5px)"></i>
<i style="top:128px;background:linear-gradient(90deg,#00d7ff 125.5px,#00cbff 144.5px,#02cbff 145.5px,#70b2ff 183.5px,#fb94ff 227.5px,#ff91fd 229.5px,#ff72d6 243.5px,#ff57b3 260.5px,#ff4097 279.5px,#ff2d7e 301.5px,#ff1763 336.5px,#ff054d 379.5px,#ff0046 397.5px,#ff003a 434.5px)"></i>
<i style="top:130px;background:linear-gradient(90deg,#00d0ff 126.5px,#01c5ff 145.5px,#70adff 184.5px,#fb8eff 229.5px,#ff8bfd 231.5px,#ff6ed6 245.5px,#ff54b6 261.5px,#ff3e99 280.5px,#ff2b81 302.5px,#ff1665 337.5px,#ff054f 380.5px,#ff0049 395.5px,#ff003d 432.5px)"></i>
<i style="top:132px;background:linear-gradient(90deg,#00cbff 126.5px,#00c0ff 145.5px,#70a7ff 185.5px,#fb88ff 231.5px,#ff85fd 233.5px,#ff69d7 247.5px,#ff51b7 263.5px,#ff3b9b 282.5px,#ff2a83 303.5px,#ff1567 338.5px,#ff0451 380.5px,#ff004b 393.5px,#ff003f 430.5px)"></i>
<i style="top:134px;background:linear-gradient(90deg,#00c5ff 127.5px,#00baff 145.5px,#02baff 146.5px,#72a1ff 187.5px,#fb82ff 233.5px,#ff80fd 235.5px,#ff64d8 249.5px,#ff4db8 265.5px,#ff399d 283.5px,#ff2885 304.5px,#ff146a 338.5px,#ff0353 380.5px,#ff004e 391.5px,#ff0041 427.5px)"></i>
<i style="top:136px;background:linear-gradient(90deg,#00c0ff 127.5px,#01b5ff 146.5px,#729bff 188.5px,#fb7cff 235.5px,#ff7afd 237.5px,#ff60d8 251.5px,#ff4bbb 266.5px,#ff38a0 284.5px,#ff2788 305.5px,#ff136c 339.5px,#ff0255 381.5px,#ff0051 389.5px,#f04 425.5px)"></i>
<i style="top:138px;background:linear-gradient(90deg,#00baff 128.5px,#00b0ff 146.5px,#7296ff 189.5px,#fb77ff 237.5px,#ff75fd 239.5px,#ff5cd9 253.5px,#ff48bc 268.5px,#ff35a1 286.5px,#ff2489 307.5px,#ff116d 342.5px,#ff0155 384.5px,#ff0046 423.5px)"></i>
<i style="top:140px;background:linear-gradient(90deg,#00b6ff 128.5px,#00acff 146.5px,#02abff 147.5px,#7491ff 191.5px,#fb72ff 239.5px,#ff70fd 241.5px,#ff58da 255.5px,#ff44bd 270.5px,#ff32a2 288.5px,#ff238b 308.5px,#ff106f 342.5px,#ff0058 384.5px,#ff0049 421.5px)"></i>
<i style="top:142px;background:linear-gradient(90deg,#00b1ff 129.5px,#01a7ff 147.5px,#748cff 192.5px,#fb6dff 241.5px,#ff6bfd 243.5px,#ff55dc 256.5px,#ff42bf 271.5px,#ff31a6 288.5px,#ff228e 308.5px,#ff0f72 342.5px,#ff005b 382.5px,#ff004c 418.5px)"></i>
<i style="top:144px;background:linear-gradient(90deg,#00acff 129.5px,#00a2ff 147.5px,#7387ff 193.5px,#fb68ff 243.5px,#ff66fd 245.5px,#ff51dd 258.5px,#ff3fc0 273.5px,#ff2fa7 290.5px,#ff2191 309.5px,#ff0f75 341.5px,#ff005e 380.5px,#ff004e 416.5px)"></i>
<i style="top:146px;background:linear-gradient(90deg,#00a7ff 130.5px,#009eff 147.5px,#029eff 148.5px,#7383ff 194.5px,#fb63ff 245.5px,#ff61fd 247.5px,#ff4dde 260.5px,#ff3cc1 275.5px,#ff2da9 291.5px,#ff1f93 310.5px,#ff0e78 341.5px,#ff0061 378.5px,#ff0051 414.5px)"></i>
<i style="top:148px;background:linear-gradient(90deg,#00a3ff 130.5px,#019aff 148.5px,#757eff 196.5px,#ff5dfd 249.5px,#ff4ade 262.5px,#ff3ac3 276.5px,#ff2bab 292.5px,#ff1e95 311.5px,#ff0e7a 341.5px,#ff0064 376.5px,#ff0054 411.5px)"></i>
<i style="top:150px;background:linear-gradient(90deg,#009fff 131.5px,#0196ff 148.5px,#757aff 197.5px,#ff58fd 251.5px,#ff46df 264.5px,#ff37c4 278.5px,#ff29ac 294.5px,#ff1c97 312.5px,#ff0d7d 341.5px,#ff0068 374.5px,#ff0057 409.5px)"></i>
<i style="top:152px;background:linear-gradient(90deg,#009bff 131.5px,#0092ff 148.5px,#0291ff 149.5px,#7576ff 198.5px,#ff54fd 253.5px,#ff43df 266.5px,#ff34c5 280.5px,#ff26ad 296.5px,#ff1b99 313.5px,#ff0d80 340.5px,#ff006b 372.5px,#ff0059 407.5px)"></i>
<i style="top:154px;background:linear-gradient(90deg,#0097ff 132.5px,#018eff 149.5px,#7472ff 199.5px,#ff50fe 255.5px,#ff41e2 267.5px,#ff32c7 281.5px,#ff25b0 297.5px,#ff199b 314.5px,#ff0c83 340.5px,#ff006e 370.5px,#ff005c 405.5px)"></i>
<i style="top:156px;background:linear-gradient(90deg,#0093ff 132.5px,#018aff 149.5px,#746eff 200.5px,#ff4cfe 257.5px,#ff3de2 269.5px,#ff30ca 282.5px,#ff24b3 297.5px,#ff199e 314.5px,#ff0c87 339.5px,#ff0072 368.5px,#ff0060 402.5px)"></i>
<i style="top:158px;background:linear-gradient(90deg,#0090ff 132.5px,#0087ff 149.5px,#0286ff 150.5px,#766aff 202.5px,#ff48fe 259.5px,#ff3ae2 271.5px,#ff2dcb 284.5px,#ff21b4 299.5px,#ff17a1 315.5px,#ff0b89 339.5px,#ff0075 367.5px,#ff0063 400.5px)"></i>
<i style="top:160px;background:linear-gradient(90deg,#008cff 133.5px,#0183ff 150.5px,#7667ff 203.5px,#ff45fe 261.5px,#ff37e3 273.5px,#ff2bcb 286.5px,#ff20b6 300.5px,#ff16a3 316.5px,#ff0a8c 339.5px,#ff0079 365.5px,#f06 398.5px)"></i>
<i style="top:162px;background:linear-gradient(90deg,#0089ff 133.5px,#0180ff 150.5px,#7563ff 204.5px,#ff41fe 263.5px,#ff35e5 274.5px,#ff29cd 287.5px,#ff1eb8 301.5px,#ff14a5 317.5px,#ff098f 339.5px,#ff007c 363.5px,#ff0069 396.5px)"></i>
<i style="top:164px;background:linear-gradient(90deg,#0085ff 134.5px,#007dff 150.5px,#027cff 151.5px,#7760ff 206.5px,#ff3efe 265.5px,#ff32e6 276.5px,#ff26ce 289.5px,#ff1dbb 302.5px,#ff13a8 317.5px,#ff0993 338.5px,#ff0080 361.5px,#ff006c 393.5px)"></i>
<i style="top:166px;background:linear-gradient(90deg,#0082ff 134.5px,#0179ff 151.5px,#775cff 207.5px,#ff3afe 267.5px,#ff2fe6 278.5px,#ff25d0 290.5px,#ff1bbd 303.5px,#ff12aa 318.5px,#ff0996 337.5px,#ff0084 359.5px,#ff0070 391.5px)"></i>
<i style="top:168px;background:linear-gradient(90deg,#007eff 135.5px,#0177ff 151.5px,#7759ff 208.5px,#ff37fe 269.5px,#ff2ce6 280.5px,#ff22d1 292.5px,#ff19bd 305.5px,#ff11ac 319.5px,#ff0899 337.5px,#f08 357.5px,#ff0073 389.5px)"></i>
<i style="top:170px;background:linear-gradient(90deg,#007bff 135.5px,#0074ff 151.5px,#0273ff 152.5px,#7656ff 209.5px,#ff34fe 271.5px,#ff29e7 282.5px,#ff20d3 293.5px,#ff10af 319.5px,#ff089d 336.5px,#ff008c 355.5px,#ff0076 387.5px)"></i>
<i style="top:172px;background:linear-gradient(90deg,#0078ff 136.5px,#0171ff 152.5px,#7853ff 211.5px,#ff31fe 273.5px,#ff26e7 284.5px,#ff1ed4 295.5px,#ff0fb1 320.5px,#ff0090 353.5px,#ff007a 384.5px)"></i>
<i style="top:174px;background:linear-gradient(90deg,#0075ff 136.5px,#016eff 152.5px,#7850ff 212.5px,#ff2efe 275.5px,#ff1cd6 296.5px,#ff0eb4 320.5px,#ff0095 351.5px,#ff007e 382.5px)"></i>
<i style="top:176px;background:linear-gradient(90deg,#0072ff 137.5px,#006bff 152.5px,#026bff 153.5px,#784dff 213.5px,#ff2bfe 277.5px,#ff1bd8 297.5px,#ff0cb6 321.5px,#f09 349.5px,#ff0081 380.5px)"></i>
<i style="top:178px;background:linear-gradient(90deg,#0070ff 137.5px,#0168ff 153.5px,#774bff 214.5px,#ff28fe 279.5px,#ff18d8 299.5px,#ff0cb9 321.5px,#ff009e 347.5px,#ff0086 377.5px)"></i>
<i style="top:180px;background:linear-gradient(90deg,#006dff 138.5px,#0166ff 153.5px,#7748ff 215.5px,#ff25fe 281.5px,#ff17da 300.5px,#ff0abb 322.5px,#ff00a1 346.5px,#ff0089 375.5px)"></i>
<i style="top:182px;background:linear-gradient(90deg,#006aff 138.5px,#0064ff 153.5px,#7745ff 216.5px,#ff22fe 283.5px,#ff15dc 301.5px,#ff09be 322.5px,#ff00a6 344.5px,#ff008d 373.5px)"></i>
<i style="top:184px;background:linear-gradient(90deg,#0068ff 139.5px,#0161ff 154.5px,#7842ff 218.5px,#ff20fe 285.5px,#ff13dd 303.5px,#ff08c0 323.5px,#ff00ab 342.5px,#ff0091 371.5px)"></i>
<i style="top:186px;background:linear-gradient(90deg,#0065ff 139.5px,#015fff 154.5px,#7840ff 219.5px,#ff1dfe 287.5px,#ff11df 304.5px,#ff07c3 323.5px,#ff00b0 340.5px,#ff0096 368.5px)"></i>
<i style="top:188px;background:linear-gradient(90deg,#0063ff 140.5px,#005cff 154.5px,#783eff 220.5px,#ff1bfe 289.5px,#ff10e1 305.5px,#ff06c7 323.5px,#ff00b5 338.5px,#ff009a 366.5px)"></i>
<i style="top:190px;background:linear-gradient(90deg,#0060ff 140.5px,#015aff 155.5px,#7d3aff 224.5px,#fe19ff 290.5px,#ff0de0 308.5px,#ff05c8 324.5px,#ff00ba 336.5px,#ff009e 364.5px)"></i>
<i style="top:192px;background:linear-gradient(90deg,#005eff 141.5px,#0158ff 155.5px,#7d38ff 225.5px,#fe16ff 292.5px,#ff0ce2 309.5px,#ff04ca 325.5px,#ff00bf 334.5px,#ff00a2 362.5px)"></i>
<i style="top:194px;background:linear-gradient(90deg,#005cff 141.5px,#0056ff 155.5px,#7c35ff 226.5px,#fe14ff 294.5px,#ff09df 313.5px,#ff00c6 331.5px,#ff00a8 359.5px)"></i>
<i style="top:196px;background:linear-gradient(90deg,#0059ff 142.5px,#0153ff 156.5px,#7c33ff 227.5px,#fe12ff 296.5px,#ff07e1 314.5px,#ff00ca 330.5px,#ff00ac 357.5px)"></i>
<i style="top:198px;background:linear-gradient(90deg,#0057ff 142.5px,#0151ff 156.5px,#7c31ff 228.5px,#fe0fff 298.5px,#ff06e4 314.5px,#ff00d0 328.5px,#ff00b1 355.5px)"></i>
<i style="top:200px;background:linear-gradient(90deg,#05f 142.5px,#004fff 156.5px,#7b2fff 229.5px,#fe0dff 300.5px,#ff00d6 326.5px,#ff00b6 352.5px)"></i>
<i style="top:202px;background:linear-gradient(90deg,#0053ff 143.5px,#014dff 157.5px,#7d2dff 231.5px,#fe0bff 302.5px,#ff00dc 324.5px,#f0b 350.5px)"></i>
<i style="top:204px;background:linear-gradient(90deg,#0051ff 143.5px,#014bff 157.5px,#7d2bff 232.5px,#fe09ff 304.5px,#ff00e2 322.5px,#ff00c0 348.5px)"></i>
<i style="top:206px;background:linear-gradient(90deg,#004fff 144.5px,#004aff 157.5px,#7c29ff 233.5px,#fe07ff 306.5px,#ff00e8 320.5px,#ff00c5 346.5px)"></i>
<i style="top:208px;background:linear-gradient(90deg,#004dff 144.5px,#0148ff 158.5px,#7e27ff 235.5px,#fe05ff 308.5px,#ff00ef 318.5px,#f0c 343.5px)"></i>
<i style="top:210px;background:linear-gradient(90deg,#004bff 145.5px,#0046ff 157.5px,#0744ff 162.5px,#7f24ff 237.5px,#fe03ff 310.5px,#ff00f4 317.5px,#ff00d1 341.5px)"></i>
<i style="top:212px;background:linear-gradient(90deg,#0049ff 145.5px,#04f 158.5px,#0543ff 161.5px,#7f23ff 238.5px,#fe01ff 312.5px,#ff00d7 339.5px)"></i>
<i style="top:214px;background:linear-gradient(90deg,#0047ff 146.5px,#0043ff 158.5px,#0c3fff 166.5px,#8220ff 241.5px,#fe00ff 314.5px,#ff00dc 337.5px)"></i>
<i style="top:216px;background:linear-gradient(90deg,#0046ff 146.5px,#0041ff 158.5px,#0a3eff 165.5px,#811eff 242.5px,#f101ff 309.5px,#fe00ff 316.5px,#ff00e4 334.5px)"></i>
<i style="top:218px;background:linear-gradient(90deg,#04f 147.5px,#003fff 159.5px,#113bff 170.5px,#841cff 245.5px,#ec00ff 308.5px,#fe00ff 318.5px,#ff00ea 332.5px)"></i>
<i style="top:220px;background:linear-gradient(90deg,#0042ff 147.5px,#013dff 160.5px,#7d1cff 242.5px,#e600ff 306.5px,#fe00ff 320.5px,#ff00f0 330.5px)"></i>
<i style="top:222px;background:linear-gradient(90deg,#0040ff 148.5px,#013cff 160.5px,#6e1fff 233.5px,#df00ff 304.5px,#fe00ff 322.5px,#ff00f6 328.5px)"></i>
<i style="top:224px;background:linear-gradient(90deg,#003fff 148.5px,#003aff 160.5px,#1335ff 173.5px,#751bff 239.5px,#d900ff 302.5px,#ff00fe 325.5px)"></i>
<i style="top:226px;background:linear-gradient(90deg,#003dff 149.5px,#0039ff 160.5px,#1733ff 176.5px,#731aff 239.5px,#d300ff 300.5px,#f900ff 323.5px)"></i>
<i style="top:228px;background:linear-gradient(90deg,#003cff 149.5px,#0038ff 160.5px,#1033ff 172.5px,#6d1aff 236.5px,#cd00ff 298.5px,#f200ff 321.5px)"></i>
<i style="top:230px;background:linear-gradient(90deg,#003aff 150.5px,#0036ff 161.5px,#1032ff 172.5px,#6a19ff 235.5px,#c700ff 296.5px,#ea00ff 318.5px)"></i>
<i style="top:232px;background:linear-gradient(90deg,#0039ff 150.5px,#0035ff 161.5px,#0a32ff 168.5px,#641aff 232.5px,#c200ff 294.5px,#e400ff 316.5px)"></i>
<i style="top:234px;background:linear-gradient(90deg,#0037ff 151.5px,#03f 161.5px,#0a30ff 169.5px,#6119ff 231.5px,#bc00ff 292.5px,#de00ff 314.5px)"></i>
<i style="top:236px;background:linear-gradient(90deg,#0036ff 151.5px,#0032ff 161.5px,#0331ff 164.5px,#5c19ff 228.5px,#b700ff 290.5px,#d800ff 312.5px)"></i>
<i style="top:238px;background:linear-gradient(90deg,#0034ff 152.5px,#0030ff 162.5px,#042fff 165.5px,#5918ff 227.5px,#b100ff 288.5px,#d100ff 309.5px)"></i>
<i style="top:240px;background:linear-gradient(90deg,#03f 152.5px,#012fff 163.5px,#5518ff 225.5px,#ac00ff 286.5px,#cb00ff 307.5px)"></i>
<i style="top:242px;background:linear-gradient(90deg,#0032ff 152.5px,#002eff 163.5px,#5217ff 224.5px,#a700ff 284.5px,#c600ff 305.5px)"></i>
<i style="top:244px;background:linear-gradient(90deg,#0030ff 153.5px,#012cff 164.5px,#5116ff 224.5px,#a200ff 282.5px,#c000ff 303.5px)"></i>
<i style="top:246px;background:linear-gradient(90deg,#002fff 153.5px,#012bff 164.5px,#4e16ff 223.5px,#9d00ff 280.5px,#ba00ff 300.5px)"></i>
<i style="top:248px;background:linear-gradient(90deg,#002dff 154.5px,#002aff 164.5px,#4c15ff 222.5px,#9800ff 278.5px,#b500ff 298.5px)"></i>
<i style="top:250px;background:linear-gradient(90deg,#002cff 154.5px,#0129ff 165.5px,#4915ff 221.5px,#9400ff 276.5px,#b000ff 296.5px)"></i>
<i style="top:252px;background:linear-gradient(90deg,#002bff 155.5px,#0127ff 165.5px,#4714ff 220.5px,#8f00ff 274.5px,#a900ff 293.5px)"></i>
<i style="top:254px;background:linear-gradient(90deg,#002aff 155.5px,#0026ff 165.5px,#8b00ff 272.5px,#a500ff 291.5px)"></i>
<i style="top:256px;background:linear-gradient(90deg,#0028ff 156.5px,#0025ff 165.5px,#8600ff 270.5px,#a000ff 289.5px)"></i>
<i style="top:258px;background:linear-gradient(90deg,#0027ff 156.5px,#0124ff 166.5px,#8200ff 268.5px,#9b00ff 287.5px)"></i>
<i style="top:260px;background:linear-gradient(90deg,#0026ff 157.5px,#0023ff 166.5px,#7f00ff 267.5px,#9500ff 284.5px)"></i>
<i style="top:262px;background:linear-gradient(90deg,#0025ff 157.5px,#02f 166.5px,#7b00ff 265.5px,#9100ff 282.5px)"></i>
<i style="top:264px;background:linear-gradient(90deg,#0024ff 158.5px,#0121ff 167.5px,#70f 263.5px,#8d00ff 280.5px)"></i>
<i style="top:266px;background:linear-gradient(90deg,#0023ff 158.5px,#0120ff 167.5px,#7300ff 261.5px,#80f 278.5px)"></i>
<i style="top:268px;background:linear-gradient(90deg,#0021ff 159.5px,#001fff 167.5px,#6f00ff 259.5px,#8300ff 275.5px)"></i>
<i style="top:270px;background:linear-gradient(90deg,#0021ff 159.5px,#011eff 168.5px,#6b00ff 257.5px,#7f00ff 273.5px)"></i>
<i style="top:272px;background:linear-gradient(90deg,#001fff 160.5px,#011dff 168.5px,#6700ff 255.5px,#7b00ff 271.5px)"></i>
<i style="top:274px;background:linear-gradient(90deg,#001eff 160.5px,#001cff 168.5px,#6400ff 253.5px,#70f 269.5px)"></i>
<i style="top:276px;background:linear-gradient(90deg,#001dff 161.5px,#011bff 169.5px,#6000ff 251.5px,#7200ff 266.5px)"></i>
<i style="top:278px;background:linear-gradient(90deg,#001cff 161.5px,#011aff 169.5px,#5c00ff 249.5px,#6e00ff 264.5px)"></i>
<i style="top:280px;background:linear-gradient(90deg,#001cff 161.5px,#0019ff 169.5px,#5900ff 247.5px,#6b00ff 262.5px)"></i>
<i style="top:282px;background:linear-gradient(90deg,#001aff 162.5px,#0118ff 170.5px,#5600ff 245.5px,#60f 259.5px)"></i>
<i style="top:284px;background:linear-gradient(90deg,#001aff 162.5px,#0117ff 170.5px,#5200ff 243.5px,#6200ff 257.5px)"></i>
<i style="top:286px;background:linear-gradient(90deg,#0018ff 163.5px,#0016ff 170.5px,#4f00ff 241.5px,#5f00ff 255.5px)"></i>
<i style="top:288px;background:linear-gradient(90deg,#0018ff 163.5px,#0115ff 171.5px,#4c00ff 239.5px,#5c00ff 253.5px)"></i>
<i style="top:290px;background:linear-gradient(90deg,#0017ff 164.5px,#0114ff 171.5px,#4800ff 237.5px,#5700ff 250.5px)"></i>
<i style="top:292px;background:linear-gradient(90deg,#0016ff 164.5px,#0014ff 171.5px,#4500ff 235.5px,#5400ff 248.5px)"></i>
<i style="top:294px;background:linear-gradient(90deg,#0015ff 165.5px,#0113ff 172.5px,#4200ff 233.5px,#5100ff 246.5px)"></i>
<i style="top:296px;background:linear-gradient(90deg,#0014ff 165.5px,#0112ff 172.5px,#3f00ff 231.5px,#4d00ff 244.5px)"></i>
<i style="top:298px;background:linear-gradient(90deg,#0013ff 166.5px,#01f 172.5px,#3c00ff 229.5px,#4900ff 241.5px)"></i>
<i style="top:300px;background:linear-gradient(90deg,#0012ff 166.5px,#0110ff 173.5px,#3900ff 227.5px,#4600ff 239.5px)"></i>
<i style="top:302px;background:linear-gradient(90deg,#01f 167.5px,#0110ff 173.5px,#3600ff 225.5px,#4300ff 237.5px)"></i>
<i style="top:304px;background:linear-gradient(90deg,#01f 167.5px,#000fff 173.5px,#3400ff 223.5px,#3f00ff 234.5px)"></i>
<i style="top:306px;background:linear-gradient(90deg,#0010ff 168.5px,#010eff 174.5px,#3100ff 221.5px,#3c00ff 232.5px)"></i>
<i style="top:308px;background:linear-gradient(90deg,#000fff 168.5px,#010dff 174.5px,#2e00ff 219.5px,#3900ff 230.5px)"></i>
<i style="top:310px;background:linear-gradient(90deg,#000eff 169.5px,#000dff 174.5px,#2c00ff 218.5px,#3700ff 228.5px)"></i>
<i style="top:312px;background:linear-gradient(90deg,#000dff 169.5px,#000cff 174.5px,#2a00ff 216.5px,#30f 225.5px)"></i>
<i style="top:314px;background:linear-gradient(90deg,#000cff 170.5px,#010bff 175.5px,#2700ff 214.5px,#3000ff 223.5px)"></i>
<i style="top:316px;background:linear-gradient(90deg,#000cff 170.5px,#000aff 175.5px,#2500ff 212.5px,#2d00ff 221.5px)"></i>
<i style="top:318px;background:linear-gradient(90deg,#000bff 171.5px,#000aff 175.5px,#20f 210.5px,#2b00ff 219.5px)"></i>
<i style="top:320px;background:linear-gradient(90deg,#000aff 171.5px,#0109ff 176.5px,#2000ff 208.5px,#2700ff 216.5px)"></i>
<i style="top:322px;background:linear-gradient(90deg,#000aff 171.5px,#0008ff 176.5px,#1d00ff 206.5px,#2500ff 214.5px)"></i>
<i style="top:324px;background:linear-gradient(90deg,#0009ff 172.5px,#0008ff 176.5px,#20f 212.5px)"></i>
<i style="top:326px;background:linear-gradient(90deg,#0008ff 172.5px,#0107ff 177.5px,#2000ff 210.5px)"></i>
<i style="top:328px;background:linear-gradient(90deg,#0007ff 173.5px,#0006ff 177.5px,#1c00ff 207.5px)"></i>
<i style="top:330px;background:linear-gradient(90deg,#0007ff 173.5px,#0006ff 177.5px,#1a00ff 205.5px)"></i>
<i style="top:332px;background:linear-gradient(90deg,#0006ff 174.5px,#0105ff 178.5px,#1800ff 203.5px)"></i>
<i style="top:334px;background:linear-gradient(90deg,#0005ff 174.5px,#0004ff 178.5px,#1500ff 200.5px)"></i>
<i style="top:336px;background:linear-gradient(90deg,#0005ff 175.5px,#0004ff 178.5px,#1200ff 198.5px)"></i>
<i style="top:338px;background:linear-gradient(90deg,#0004ff 175.5px,#0103ff 179.5px,#1000ff 196.5px)"></i>
<i style="top:340px;background:linear-gradient(90deg,#0003ff 176.5px,#0003ff 179.5px,#0e00ff 194.5px)"></i>
<i style="top:342px;background:linear-gradient(90deg,#0003ff 176.5px,#0002ff 179.5px,#0b00ff 191.5px)"></i>
<i style="top:344px;background:linear-gradient(90deg,#0002ff 177.5px,#0900ff 189.5px)"></i>
<i style="top:346px;background:linear-gradient(90deg,#0001ff 177.5px,#0700ff 187.5px)"></i>
<i style="top:348px;background:linear-gradient(90deg,#0001ff 178.5px,#0400ff 185.5px)"></i>
</div>
<div class="cie" style="left:639px;top:617px;width:329px;height:191px">
<i style="top:0px;background:linear-gradient(90deg,#89ffd1 0.5px,#c2ffce 131.5px,#ffc 256.5px,#ffdeb0 328.5px)"></i>
<i style="top:2px;background:linear-gradient(90deg,#8affd2 0.5px,#c2ffcf 130.5px,#ffffcd 254.5px,#ffddb0 328.5px)"></i>
<i style="top:4px;background:linear-gradient(90deg,#8affd2 0.5px,#c3ffd0 129.5px,#ffffce 252.5px,#ffdcb1 328.5px)"></i>
<i style="top:6px;background:linear-gradient(90deg,#8bffd3 0.5px,#c3ffd1 128.5px,#ffffcf 250.5px,#ffdcb1 328.5px)"></i>
<i style="top:8px;background:linear-gradient(90deg,#8bffd4 0.5px,#c4ffd2 127.5px,#ffffd0 248.5px,#ffdbb1 328.5px)"></i>
<i style="top:10px;background:linear-gradient(90deg,#8cffd5 0.5px,#c4ffd3 126.5px,#ffffd1 246.5px,#ffdab1 328.5px)"></i>
<i style="top:12px;background:linear-gradient(90deg,#8dffd6 0.5px,#c4ffd4 125.5px,#ffffd2 244.5px,#ffd9b1 328.5px)"></i>
<i style="top:14px;background:linear-gradient(90deg,#8dffd7 0.5px,#c5ffd5 124.5px,#ffffd3 242.5px,#ffd8b2 328.5px)"></i>
<i style="top:16px;background:linear-gradient(90deg,#8effd8 0.5px,#c5ffd6 123.5px,#ffffd4 240.5px,#ffd7b2 328.5px)"></i>
<i style="top:18px;background:linear-gradient(90deg,#8fffd9 0.5px,#c5ffd7 122.5px,#ffffd5 238.5px,#ffe9c2 284.5px,#ffd6b2 328.5px)"></i>
<i style="top:20px;background:linear-gradient(90deg,#8fffda 0.5px,#c6ffd8 121.5px,#ffffd6 236.5px,#ffe9c3 283.5px,#ffd6b2 328.5px)"></i>
<i style="top:22px;background:linear-gradient(90deg,#90ffdb 0.5px,#c6ffd9 120.5px,#ffffd7 234.5px,#ffe8c3 282.5px,#ffd5b2 328.5px)"></i>
<i style="top:24px;background:linear-gradient(90deg,#91ffdc 0.5px,#c7ffda 119.5px,#ffffd8 232.5px,#ffe8c4 281.5px,#ffd4b2 328.5px)"></i>
<i style="top:26px;background:linear-gradient(90deg,#91ffdd 0.5px,#c7ffdb 118.5px,#ffffd9 230.5px,#ffe7c4 280.5px,#ffd3b3 328.5px)"></i>
<i style="top:28px;background:linear-gradient(90deg,#92ffdd 0.5px,#c7ffdc 117.5px,#ffffda 228.5px,#ffe7c5 279.5px,#ffd2b3 328.5px)"></i>
<i style="top:30px;background:linear-gradient(90deg,#93ffde 0.5px,#c8ffdd 116.5px,#ffffdb 226.5px,#ffe6c5 278.5px,#ffd1b3 328.5px)"></i>
<i style="top:32px;background:linear-gradient(90deg,#94ffdf 0.5px,#c8ffde 115.5px,#ffffdc 224.5px,#ffe6c6 276.5px,#ffd1b3 328.5px)"></i>
<i style="top:34px;background:linear-gradient(90deg,#94ffe0 0.5px,#c8ffdf 114.5px,#ffffde 222.5px,#ffe6c7 275.5px,#ffd0b3 328.5px)"></i>
<i style="top:36px;background:linear-gradient(90deg,#95ffe1 0.5px,#c9ffe0 113.5px,#ffffdf 220.5px,#ffe5c7 274.5px,#ffcfb3 328.5px)"></i>
<i style="top:38px;background:linear-gradient(90deg,#96ffe2 0.5px,#c9ffe1 111.5px,#ffffe0 218.5px,#ffe5c8 273.5px,#ffceb4 328.5px)"></i>
<i style="top:40px;background:linear-gradient(90deg,#96ffe3 0.5px,#c9ffe2 109.5px,#ffffe1 217.5px,#ffe5c9 271.5px,#ffcdb4 328.5px)"></i>
<i style="top:42px;background:linear-gradient(90deg,#97ffe4 0.5px,#c9ffe3 108.5px,#ffffe2 215.5px,#ffe4c9 270.5px,#ffccb4 328.5px)"></i>
<i style="top:44px;background:linear-gradient(90deg,#98ffe5 0.5px,#c9ffe4 107.5px,#ffffe3 213.5px,#ffe4ca 268.5px,#ffccb4 328.5px)"></i>
<i style="top:46px;background:linear-gradient(90deg,#99ffe6 0.5px,#caffe5 106.5px,#ffffe4 211.5px,#ffe4cb 267.5px,#ffcbb4 328.5px)"></i>
<i style="top:48px;background:linear-gradient(90deg,#99ffe7 0.5px,#caffe6 105.5px,#ffffe5 209.5px,#ffe3cb 266.5px,#ffcab4 328.5px)"></i>
<i style="top:50px;background:linear-gradient(90deg,#9affe8 0.5px,#cbffe7 104.5px,#ffffe6 207.5px,#ffe3cc 265.5px,#ffc9b4 328.5px)"></i>
<i style="top:52px;background:linear-gradient(90deg,#9bffe9 0.5px,#cbffe8 103.5px,#ffffe7 205.5px,#ffe2cd 264.5px,#ffc8b5 328.5px)"></i>
<i style="top:54px;background:linear-gradient(90deg,#9bffea 0.5px,#cbffe9 102.5px,#ffffe8 203.5px,#ffe2cd 263.5px,#ffc7b5 328.5px)"></i>
<i style="top:56px;background:linear-gradient(90deg,#9cffeb 0.5px,#ccffea 101.5px,#ffffe9 201.5px,#ffe1ce 262.5px,#ffc7b5 328.5px)"></i>
<i style="top:58px;background:linear-gradient(90deg,#9dffec 0.5px,#ccffeb 100.5px,#ffffea 199.5px,#ffe1ce 261.5px,#ffc6b5 328.5px)"></i>
<i style="top:60px;background:linear-gradient(90deg,#9effed 0.5px,#cdffec 99.5px,#ffffec 197.5px,#ffe0cf 260.5px,#ffc5b5 328.5px)"></i>
<i style="top:62px;background:linear-gradient(90deg,#9effee 0.5px,#cdffed 98.5px,#ffffed 195.5px,#ffe0cf 259.5px,#ffc4b5 328.5px)"></i>
<i style="top:64px;background:linear-gradient(90deg,#9fffef 0.5px,#cdffef 97.5px,#ffe 193.5px,#ffdfd0 258.5px,#ffc3b6 328.5px)"></i>
<i style="top:66px;background:linear-gradient(90deg,#a0fff0 0.5px,#cefff0 96.5px,#ffffef 191.5px,#ffdfd0 257.5px,#ffc3b6 328.5px)"></i>
<i style="top:68px;background:linear-gradient(90deg,#a1fff1 0.5px,#cefff1 95.5px,#fffff0 189.5px,#ffdfd1 255.5px,#ffc2b6 328.5px)"></i>
<i style="top:70px;background:linear-gradient(90deg,#a1fff2 0.5px,#cffff2 94.5px,#fffff1 187.5px,#ffded2 254.5px,#ffc1b6 328.5px)"></i>
<i style="top:72px;background:linear-gradient(90deg,#a2fff3 0.5px,#cffff3 93.5px,#fffff2 185.5px,#ffded3 253.5px,#ffc0b6 328.5px)"></i>
<i style="top:74px;background:linear-gradient(90deg,#a3fff4 0.5px,#cffff4 92.5px,#fffff3 183.5px,#ffddd3 252.5px,#ffbfb6 328.5px)"></i>
<i style="top:76px;background:linear-gradient(90deg,#a4fff5 0.5px,#d0fff5 91.5px,#fffff5 181.5px,#ffddd4 251.5px,#ffbfb7 328.5px)"></i>
<i style="top:78px;background:linear-gradient(90deg,#a4fff6 0.5px,#d0fff6 90.5px,#fffff6 179.5px,#ffdcd4 250.5px,#ffbeb7 328.5px)"></i>
<i style="top:80px;background:linear-gradient(90deg,#a5fff7 0.5px,#d1fff7 89.5px,#fffff7 177.5px,#ffdcd5 249.5px,#ffbdb7 328.5px)"></i>
<i style="top:82px;background:linear-gradient(90deg,#a6fff9 0.5px,#d1fff8 88.5px,#fffff8 175.5px,#ffdbd5 248.5px,#ffbcb7 328.5px)"></i>
<i style="top:84px;background:linear-gradient(90deg,#a7fffa 0.5px,#d1fff9 87.5px,#fffff9 173.5px,#ffdbd6 247.5px,#ffbcb7 328.5px)"></i>
<i style="top:86px;background:linear-gradient(90deg,#a8fffb 0.5px,#d2fffb 86.5px,#fffffa 171.5px,#ffdad6 246.5px,#ffbbb7 328.5px)"></i>
<i style="top:88px;background:linear-gradient(90deg,#a8fffc 0.5px,#d2fffc 85.5px,#fffffc 169.5px,#ffdad7 244.5px,#ffbab7 328.5px)"></i>
<i style="top:90px;background:linear-gradient(90deg,#a9fffd 0.5px,#d3fffd 84.5px,#fffffd 167.5px,#ffdad8 243.5px,#ffb9b8 328.5px)"></i>
<i style="top:92px;background:linear-gradient(90deg,#aafffe 0.5px,#d3fffe 83.5px,#fffffe 165.5px,#ffd9d9 242.5px,#ffb8b8 328.5px)"></i>
<i style="top:94px;background:linear-gradient(90deg,#abffff 0.5px,#d2ffff 80.5px,#fff 164.5px,#ffd9d9 241.5px,#ffb8b8 328.5px)"></i>
<i style="top:96px;background:linear-gradient(90deg,#abfeff 0.5px,#d3feff 81.5px,#fffdff 164.5px,#ffd8d9 241.5px,#ffb7b8 328.5px)"></i>
<i style="top:98px;background:linear-gradient(90deg,#abfdff 0.5px,#d3fdff 82.5px,#fffcff 164.5px,#ffd7d9 241.5px,#ffb6b8 328.5px)"></i>
<i style="top:100px;background:linear-gradient(90deg,#abfcff 0.5px,#d4fbff 83.5px,#fffbff 164.5px,#ffd6da 241.5px,#ffb5b8 328.5px)"></i>
<i style="top:102px;background:linear-gradient(90deg,#abfbff 0.5px,#d4faff 83.5px,#fffaff 164.5px,#ffd5da 241.5px,#ffb5b9 328.5px)"></i>
<i style="top:104px;background:linear-gradient(90deg,#abf9ff 0.5px,#d4f9ff 83.5px,#fff9ff 164.5px,#ffd4d9 242.5px,#ffb4b9 328.5px)"></i>
<i style="top:106px;background:linear-gradient(90deg,#abf8ff 0.5px,#d4f8ff 83.5px,#fff8ff 164.5px,#ffd3d9 242.5px,#ffb3b9 328.5px)"></i>
<i style="top:108px;background:linear-gradient(90deg,#abf7ff 0.5px,#d3f7ff 81.5px,#fff6ff 165.5px,#ffd2da 242.5px,#ffb2b9 328.5px)"></i>
<i style="top:110px;background:linear-gradient(90deg,#abf6ff 0.5px,#d3f6ff 82.5px,#fff5ff 165.5px,#ffd1da 242.5px,#ffb1b9 328.5px)"></i>
<i style="top:112px;background:linear-gradient(90deg,#abf5ff 0.5px,#d4f5ff 83.5px,#fff4ff 165.5px,#ffd0da 242.5px,#ffb1b9 328.5px)"></i>
<i style="top:114px;background:linear-gradient(90deg,#abf4ff 0.5px,#d4f4ff 84.5px,#fff3ff 165.5px,#ffcfda 242.5px,#ffb0b9 328.5px)"></i>
<i style="top:116px;background:linear-gradient(90deg,#acf3ff 0.5px,#d4f3ff 84.5px,#fff2ff 165.5px,#ffceda 242.5px,#ffafba 328.5px)"></i>
<i style="top:118px;background:linear-gradient(90deg,#acf2ff 0.5px,#d4f1ff 84.5px,#fff1ff 165.5px,#ffcdda 243.5px,#ffaeba 328.5px)"></i>
<i style="top:120px;background:linear-gradient(90deg,#acf1ff 0.5px,#d3f0ff 81.5px,#ffefff 166.5px,#ffcdda 242.5px,#ffaeba 328.5px)"></i>
<i style="top:122px;background:linear-gradient(90deg,#acf0ff 0.5px,#d3efff 82.5px,#fef 166.5px,#ffccda 242.5px,#ffadba 328.5px)"></i>
<i style="top:124px;background:linear-gradient(90deg,#acefff 0.5px,#d4eeff 83.5px,#ffedff 166.5px,#ffcbdb 242.5px,#ffacba 328.5px)"></i>
<i style="top:126px;background:linear-gradient(90deg,#aceeff 0.5px,#d4edff 84.5px,#ffecff 166.5px,#ffcadb 242.5px,#ffabba 328.5px)"></i>
<i style="top:128px;background:linear-gradient(90deg,#acedff 0.5px,#d4ecff 84.5px,#ffebff 166.5px,#ffc9da 243.5px,#ffabba 328.5px)"></i>
<i style="top:130px;background:linear-gradient(90deg,#acecff 0.5px,#d4ebff 84.5px,#ffeaff 166.5px,#ffc8db 243.5px,#fab 328.5px)"></i>
<i style="top:132px;background:linear-gradient(90deg,#acebff 0.5px,#d4eaff 84.5px,#ffe9ff 166.5px,#ffc7db 243.5px,#ffa9bb 328.5px)"></i>
<i style="top:134px;background:linear-gradient(90deg,#aceaff 0.5px,#d3e9ff 82.5px,#ffe8ff 167.5px,#ffc6db 243.5px,#ffa9bb 328.5px)"></i>
<i style="top:136px;background:linear-gradient(90deg,#ace9ff 0.5px,#d4e8ff 83.5px,#ffe7ff 167.5px,#ffc5db 243.5px,#ffa8bb 328.5px)"></i>
<i style="top:138px;background:linear-gradient(90deg,#ace8ff 0.5px,#d4e7ff 84.5px,#ffe6ff 167.5px,#ffc4db 243.5px,#ffa7bb 328.5px)"></i>
<i style="top:140px;background:linear-gradient(90deg,#ace7ff 0.5px,#d5e6ff 85.5px,#ffe5ff 167.5px,#ffc4db 243.5px,#ffa6bb 328.5px)"></i>
<i style="top:142px;background:linear-gradient(90deg,#ace6ff 0.5px,#d5e5ff 85.5px,#ffe3ff 167.5px,#ffc3db 243.5px,#ffa6bc 328.5px)"></i>
<i style="top:144px;background:linear-gradient(90deg,#ace5ff 0.5px,#d5e3ff 85.5px,#ffe2ff 167.5px,#ffc1db 244.5px,#ffa5bc 328.5px)"></i>
<i style="top:146px;background:linear-gradient(90deg,#ace3ff 0.5px,#d3e2ff 82.5px,#ffe1ff 168.5px,#ffc1db 243.5px,#ffa4bc 328.5px)"></i>
<i style="top:148px;background:linear-gradient(90deg,#ade2ff 0.5px,#d4e1ff 83.5px,#ffe0ff 168.5px,#ffc0dc 243.5px,#ffa3bc 328.5px)"></i>
<i style="top:150px;background:linear-gradient(90deg,#ade1ff 0.5px,#d4e0ff 84.5px,#ffdfff 168.5px,#ffbfdc 243.5px,#ffa3bc 328.5px)"></i>
<i style="top:152px;background:linear-gradient(90deg,#ade0ff 0.5px,#d5dfff 85.5px,#ffdeff 168.5px,#ffbedc 243.5px,#ffa2bc 328.5px)"></i>
<i style="top:154px;background:linear-gradient(90deg,#addfff 0.5px,#d5deff 85.5px,#fdf 168.5px,#ffbddc 244.5px,#ffa1bc 328.5px)"></i>
<i style="top:156px;background:linear-gradient(90deg,#addeff 0.5px,#d5ddff 85.5px,#ffdcff 168.5px,#ffbcdc 244.5px,#ffa1bd 328.5px)"></i>
<i style="top:158px;background:linear-gradient(90deg,#adddff 0.5px,#d5dcff 85.5px,#ffdbff 168.5px,#ffbbdb 245.5px,#ffa0bd 328.5px)"></i>
<i style="top:160px;background:linear-gradient(90deg,#adddff 0.5px,#d4dbff 83.5px,#ffdaff 169.5px,#ffbbdc 244.5px,#ff9fbd 328.5px)"></i>
<i style="top:162px;background:linear-gradient(90deg,#addcff 0.5px,#d4daff 84.5px,#ffd9ff 169.5px,#ffbadc 244.5px,#ff9ebd 328.5px)"></i>
<i style="top:164px;background:linear-gradient(90deg,#addbff 0.5px,#d5d9ff 85.5px,#ffd8ff 169.5px,#ffb9dc 244.5px,#ff9ebd 328.5px)"></i>
<i style="top:166px;background:linear-gradient(90deg,#addaff 0.5px,#d5d8ff 86.5px,#ffd7ff 169.5px,#ffb8dc 244.5px,#ff9dbd 328.5px)"></i>
<i style="top:168px;background:linear-gradient(90deg,#add9ff 0.5px,#d5d7ff 86.5px,#ffd6ff 169.5px,#ffb7dc 245.5px,#ff9cbd 328.5px)"></i>
<i style="top:170px;background:linear-gradient(90deg,#add8ff 0.5px,#d5d6ff 86.5px,#ffd5ff 169.5px,#ffb6dc 245.5px,#ff9cbe 328.5px)"></i>
<i style="top:172px;background:linear-gradient(90deg,#add7ff 0.5px,#d4d5ff 83.5px,#ffd3ff 170.5px,#ffb5dc 245.5px,#ff9bbe 328.5px)"></i>
<i style="top:174px;background:linear-gradient(90deg,#add6ff 0.5px,#d4d4ff 84.5px,#ffd2ff 170.5px,#ffb5dc 245.5px,#ff9abe 328.5px)"></i>
<i style="top:176px;background:linear-gradient(90deg,#add5ff 0.5px,#d5d3ff 85.5px,#ffd1ff 170.5px,#ffb4dc 245.5px,#ff99be 328.5px)"></i>
<i style="top:178px;background:linear-gradient(90deg,#add4ff 0.5px,#d5d2ff 86.5px,#ffd0ff 170.5px,#ffb3dd 245.5px,#ff99be 328.5px)"></i>
<i style="top:180px;background:linear-gradient(90deg,#aed3ff 0.5px,#d5d1ff 86.5px,#ffcfff 170.5px,#ffb2dd 245.5px,#ff98be 328.5px)"></i>
<i style="top:182px;background:linear-gradient(90deg,#aed2ff 0.5px,#d5d0ff 86.5px,#ffceff 170.5px,#ffb1dd 245.5px,#ff97be 328.5px)"></i>
<i style="top:184px;background:linear-gradient(90deg,#aed1ff 0.5px,#d5cfff 86.5px,#ffcdff 170.5px,#ffb0dc 246.5px,#ff97be 328.5px)"></i>
<i style="top:186px;background:linear-gradient(90deg,#aed0ff 0.5px,#d4ceff 84.5px,#fcf 171.5px,#ffb0dd 245.5px,#ff96bf 328.5px)"></i>
<i style="top:188px;background:linear-gradient(90deg,#aecfff 0.5px,#d5cdff 85.5px,#ffcbff 171.5px,#ffafdd 245.5px,#ff95bf 328.5px)"></i>
<i style="top:190px;background:linear-gradient(90deg,#aeceff 0.5px,#d5cdff 86.5px,#ffcbff 171.5px,#ffaedd 245.5px,#ff95bf 328.5px)"></i>
</div>
<svg width="1643" height="891" viewBox="0 0 1643 891">
<defs>
<linearGradient id="gTab" x1="0" y1="0" x2="0" y2="1"><stop offset="0" stop-color="#4a4a4a"/><stop offset="1" stop-color="#2b2b2b"/></linearGradient>
<linearGradient id="gTool" x1="0" y1="0" x2="0" y2="1"><stop offset="0" stop-color="#555"/><stop offset="1" stop-color="#7b7b7b"/></linearGradient>
<linearGradient id="gCirc" x1="0" y1="0" x2="0" y2="1"><stop offset="0" stop-color="#3e3e3e"/><stop offset="1" stop-color="#8c8c8c"/></linearGradient>
<linearGradient id="gGear" x1="0" y1="0" x2="0" y2="1"><stop offset="0" stop-color="#4c4c4c"/><stop offset="1" stop-color="#888"/></linearGradient>
<linearGradient id="gBtn" x1="0" y1="0" x2="0" y2="1"><stop offset="0" stop-color="#8c8c8c"/><stop offset="1" stop-color="#4e4e4e"/></linearGradient>
<linearGradient id="deW" x1="0" y1="0" x2="1" y2="0"><stop offset="0" stop-color="#ffffff"/><stop offset="0.2" stop-color="#ffffff"/><stop offset="0.52" stop-color="#ffffff"/><stop offset="1" stop-color="#707070"/></linearGradient>
<linearGradient id="deY" x1="0" y1="0" x2="1" y2="0"><stop offset="0" stop-color="#d6d650"/><stop offset="0.2" stop-color="#c2c200"/><stop offset="0.52" stop-color="#c2c200"/><stop offset="1" stop-color="#525200"/></linearGradient>
<linearGradient id="deM" x1="0" y1="0" x2="1" y2="0"><stop offset="0" stop-color="#d850d4"/><stop offset="0.2" stop-color="#c000c0"/><stop offset="0.52" stop-color="#c000c0"/><stop offset="1" stop-color="#500050"/></linearGradient>
<linearGradient id="deC" x1="0" y1="0" x2="1" y2="0"><stop offset="0" stop-color="#50d8d8"/><stop offset="0.2" stop-color="#00c0c0"/><stop offset="0.52" stop-color="#00c0c0"/><stop offset="1" stop-color="#005050"/></linearGradient>
<linearGradient id="deB" x1="0" y1="0" x2="1" y2="0"><stop offset="0" stop-color="#4848d8"/><stop offset="0.2" stop-color="#0000c0"/><stop offset="0.52" stop-color="#0000c0"/><stop offset="1" stop-color="#000050"/></linearGradient>
<linearGradient id="deG" x1="0" y1="0" x2="1" y2="0"><stop offset="0" stop-color="#50d850"/><stop offset="0.2" stop-color="#00c000"/><stop offset="0.52" stop-color="#00c000"/><stop offset="1" stop-color="#005000"/></linearGradient>
<linearGradient id="deR" x1="0" y1="0" x2="1" y2="0"><stop offset="0" stop-color="#d85050"/><stop offset="0.2" stop-color="#c00000"/><stop offset="0.52" stop-color="#c00000"/><stop offset="1" stop-color="#500000"/></linearGradient>
<linearGradient id="deK" x1="0" y1="0" x2="1" y2="0"><stop offset="0" stop-color="#dcdcdc"/><stop offset="0.2" stop-color="#c0c0c0"/><stop offset="0.52" stop-color="#c0c0c0"/><stop offset="1" stop-color="#5a5a5a"/></linearGradient>
<linearGradient id="gDC" x1="0" y1="0" x2="0" y2="1"><stop offset="0" stop-color="#fff"/><stop offset="0.45" stop-color="#fff"/><stop offset="1" stop-color="#7a7a7a"/></linearGradient>
<linearGradient id="gRb" x1="0" y1="0" x2="0" y2="1"><stop offset="0" stop-color="#ff3030"/><stop offset="0.12" stop-color="#ff0000"/><stop offset="0.45" stop-color="#ff0000"/><stop offset="1" stop-color="#7a0000"/></linearGradient>
<linearGradient id="gGb" x1="0" y1="0" x2="0" y2="1"><stop offset="0" stop-color="#0c960c"/><stop offset="1" stop-color="#006400"/></linearGradient>
<linearGradient id="gBb" x1="0" y1="0" x2="0" y2="1"><stop offset="0" stop-color="#2020ff"/><stop offset="1" stop-color="#0000b0"/></linearGradient>
<linearGradient id="gHdr" x1="0" y1="0" x2="0" y2="1"><stop offset="0" stop-color="#2e2e2e"/><stop offset="0.48" stop-color="#2a2a2a"/><stop offset="0.5" stop-color="#1c1c1c"/><stop offset="1" stop-color="#0c0c0c"/></linearGradient>
<linearGradient id="gRowH" x1="0" y1="0" x2="0" y2="1"><stop offset="0" stop-color="#1e1e1e"/><stop offset="1" stop-color="#303030"/></linearGradient>
<clipPath id="cpT"><rect x="986" y="603" width="613" height="191.5"/></clipPath>
<linearGradient id="gPan" x1="0" y1="0" x2="0" y2="1"><stop offset="0" stop-color="#b4b4b4"/><stop offset="0.06" stop-color="#a6a6a6"/><stop offset="1" stop-color="#5c5c5c"/></linearGradient>
<linearGradient id="gCb" x1="0" y1="0" x2="0" y2="1"><stop offset="0" stop-color="#b6b6b6"/><stop offset="1" stop-color="#6c6c6c"/></linearGradient>
<linearGradient id="gCb2" x1="0" y1="0" x2="0" y2="1"><stop offset="0" stop-color="#b4b4b4"/><stop offset="1" stop-color="#8a8a8a"/></linearGradient>
<linearGradient id="gCc" x1="0" y1="0" x2="0" y2="1"><stop offset="0" stop-color="#767676"/><stop offset="1" stop-color="#b2b2b2"/></linearGradient>
<linearGradient id="gUp" x1="0" y1="0" x2="0" y2="1"><stop offset="0" stop-color="#b0b0b0"/><stop offset="1" stop-color="#8c8c8c"/></linearGradient>
<linearGradient id="gSt" x1="0" y1="0" x2="0" y2="1"><stop offset="0" stop-color="#8e8e8e"/><stop offset="1" stop-color="#6a6a6a"/></linearGradient>
<linearGradient id="gSq" x1="0" y1="0" x2="0" y2="1"><stop offset="0" stop-color="#b8b8b8"/><stop offset="0.39" stop-color="#aaa"/><stop offset="0.4" stop-color="#8e8e8e"/><stop offset="1" stop-color="#7a7a7a"/></linearGradient>
<linearGradient id="gSel" x1="0" y1="0" x2="0" y2="1"><stop offset="0" stop-color="#1a1a1a"/><stop offset="0.85" stop-color="#323232"/></linearGradient>
</defs>
<!-- sec_top -->
<rect x="0" y="0" width="1643" height="34" fill="#222"/>
<rect x="0" y="0" width="68" height="33" fill="url(#gTab)"/>
<rect x="68" y="0" width="1" height="33" fill="#8a8a8a"/>
<rect x="69" y="0" width="41" height="33" fill="url(#gTab)"/>
<rect x="110" y="0" width="1" height="33" fill="#8a8a8a"/>
<circle cx="87.5" cy="17" r="12" fill="#3a3a3a"/>
<line x1="84" y1="18.5" x2="91.5" y2="18.5" stroke="#9a9a9a" stroke-width="1"/>
<line x1="87.7" y1="15" x2="87.7" y2="22.5" stroke="#9a9a9a" stroke-width="1"/>
<text x="3.0" y="21.2" font-size="14.6" textLength="58.0" lengthAdjust="spacingAndGlyphs" fill="#eee">History 1</text>
<rect x="1050" y="0" width="133" height="33" fill="url(#gTool)"/>
<rect x="1050" y="0" width="8" height="33" fill="#1fd01f"/>
<circle cx="1159.5" cy="14.6" r="12" fill="url(#gCirc)"/>
<path d="M1153.5,12.5 h12 l-6,6.5 z" fill="#fff"/>
<text x="1061.0" y="9.5" font-size="13.6" textLength="82.0" lengthAdjust="spacingAndGlyphs" fill="#f4f4f4" stroke="#f4f4f4" stroke-width="0.25">X-Rite i1Pro 3</text>
<text x="1061.0" y="28.8" font-size="13.6" textLength="69.5" lengthAdjust="spacingAndGlyphs" fill="#f4f4f4" stroke="#f4f4f4" stroke-width="0.25">Direct View</text>
<rect x="1184" y="0" width="44" height="33" fill="url(#gTool)"/>
<circle cx="1209.5" cy="14.6" r="15.5" fill="#0000f0" stroke="#fff" stroke-width="1.2"/>
<text x="1209.6" y="19.4" font-size="12" text-anchor="middle" textLength="18.5" lengthAdjust="spacingAndGlyphs" fill="#fff">709</text>
<rect x="1236" y="0" width="162" height="33" fill="url(#gTool)"/>
<rect x="1236" y="0" width="8" height="33" fill="#1fd01f"/>
<circle cx="1377.7" cy="14.6" r="12" fill="url(#gCirc)"/>
<path d="M1371.7,12.5 h12 l-6,6.5 z" fill="#fff"/>
<text x="1247.0" y="9.5" font-size="13.6" textLength="80.0" lengthAdjust="spacingAndGlyphs" fill="#f4f4f4" stroke="#f4f4f4" stroke-width="0.25">Mobile Forge</text>
<rect x="1406" y="0" width="179" height="33" fill="url(#gTool)"/>
<rect x="1406" y="0" width="8" height="33" fill="#f0f000"/>
<circle cx="1564.8" cy="14.6" r="12" fill="url(#gCirc)"/>
<path d="M1558.8,12.5 h12 l-6,6.5 z" fill="#fff"/>
<text x="1417.0" y="9.5" font-size="13.6" textLength="131.0" lengthAdjust="spacingAndGlyphs" fill="#f4f4f4" stroke="#f4f4f4" stroke-width="0.25">Direct Display Control</text>
<rect x="1589.5" y="-6" width="41" height="36.5" rx="5" fill="url(#gGear)" stroke="#bbb" stroke-width="1"/>
<rect x="1632.5" y="-6" width="41" height="36.5" rx="5" fill="url(#gGear)" stroke="#bbb" stroke-width="1"/>
<circle cx="1610" cy="13.5" r="12" fill="#777"/>
<path d="M1618.1,12.2 L1618.1,14.8 L1615.8,14.9 L1615.1,16.6 L1616.6,18.3 L1614.8,20.1 L1613.1,18.6 L1611.4,19.3 L1611.3,21.6 L1608.7,21.6 L1608.6,19.3 L1606.9,18.6 L1605.2,20.1 L1603.4,18.3 L1604.9,16.6 L1604.2,14.9 L1601.9,14.8 L1601.9,12.2 L1604.2,12.1 L1604.9,10.4 L1603.4,8.7 L1605.2,6.9 L1606.9,8.4 L1608.6,7.7 L1608.7,5.4 L1611.3,5.4 L1611.4,7.7 L1613.1,8.4 L1614.8,6.9 L1616.6,8.7 L1615.1,10.4 L1615.8,12.1Z M1613.4,13.5 a3.4,3.4 0 1,0 -6.8,0 a3.4,3.4 0 1,0 6.8,0Z" fill="#ddd" fill-rule="evenodd"/>
<text x="46.0" y="90.0" font-size="40" textLength="217.0" lengthAdjust="spacingAndGlyphs" fill="#f4f4f4">Color Gamut</text>
<!-- sec_de -->
<rect x="42.5" y="143.5" width="324" height="401" fill="#262626" stroke="#999" stroke-width="1"/>
<line x1="84.5" y1="143.5" x2="84.5" y2="550" stroke="#999" stroke-width="1"/>
<line x1="128.5" y1="143.5" x2="128.5" y2="550" stroke="#999" stroke-width="1"/>
<line x1="171.5" y1="143.5" x2="171.5" y2="550" stroke="#999" stroke-width="1"/>
<line x1="215.5" y1="143.5" x2="215.5" y2="550" stroke="#999" stroke-width="1"/>
<line x1="258.5" y1="143.5" x2="258.5" y2="550" stroke="#999" stroke-width="1"/>
<line x1="300.5" y1="143.5" x2="300.5" y2="550" stroke="#999" stroke-width="1"/>
<line x1="344.5" y1="143.5" x2="344.5" y2="550" stroke="#999" stroke-width="1"/>
<line x1="42.5" y1="143.5" x2="42.5" y2="550" stroke="#a0a0a0" stroke-width="1"/>
<text x="41.9" y="564.5" font-size="14" text-anchor="middle" fill="#d4d4d4">0</text>
<text x="85.3" y="564.5" font-size="14" text-anchor="middle" fill="#d4d4d4">2</text>
<text x="128.8" y="564.5" font-size="14" text-anchor="middle" fill="#d4d4d4">4</text>
<text x="171.3" y="564.5" font-size="14" text-anchor="middle" fill="#d4d4d4">6</text>
<text x="214.7" y="564.5" font-size="14" text-anchor="middle" fill="#d4d4d4">8</text>
<text x="258.4" y="564.5" font-size="14" text-anchor="middle" fill="#d4d4d4">10</text>
<text x="301.6" y="564.5" font-size="14" text-anchor="middle" fill="#d4d4d4">12</text>
<text x="344.9" y="564.5" font-size="14" text-anchor="middle" fill="#d4d4d4">14</text>
<rect x="43" y="149.5" width="164.2" height="38" fill="url(#deW)" stroke="#000" stroke-width="1"/>
<rect x="43" y="199.5" width="137.8" height="38" fill="url(#deY)" stroke="#000" stroke-width="1"/>
<rect x="43" y="249.5" width="94.2" height="38" fill="url(#deM)" stroke="#000" stroke-width="1"/>
<rect x="43" y="299.5" width="90.9" height="38" fill="url(#deC)" stroke="#000" stroke-width="1"/>
<rect x="43" y="349.5" width="26.2" height="38" fill="url(#deB)" stroke="#000" stroke-width="1"/>
<rect x="43" y="399.5" width="113.1" height="38" fill="url(#deG)" stroke="#000" stroke-width="1"/>
<rect x="43" y="449.5" width="135.3" height="38" fill="url(#deR)" stroke="#000" stroke-width="1"/>
<rect x="43" y="499.5" width="137.9" height="38" fill="url(#deK)" stroke="#000" stroke-width="1"/>
<text x="204.8" y="138.9" font-size="14" text-anchor="middle" textLength="77.0" lengthAdjust="spacingAndGlyphs" fill="#ddd">DeltaE 2000</text>
<!-- sec_delta -->
<rect x="417.5" y="78" width="140" height="306.5" fill="#262626"/>
<line x1="412.5" y1="79.5" x2="557.5" y2="79.5" stroke="#999" stroke-width="1"/>
<text x="411.0" y="84.7" font-size="14" text-anchor="end" fill="#d4d4d4">15</text>
<line x1="412.5" y1="130.5" x2="557.5" y2="130.5" stroke="#999" stroke-width="1"/>
<text x="411.0" y="135.7" font-size="14" text-anchor="end" fill="#d4d4d4">10</text>
<line x1="412.5" y1="181.5" x2="557.5" y2="181.5" stroke="#999" stroke-width="1"/>
<text x="411.0" y="186.7" font-size="14" text-anchor="end" fill="#d4d4d4">5</text>
<line x1="412.5" y1="232.5" x2="557.5" y2="232.5" stroke="#999" stroke-width="1"/>
<text x="411.0" y="237.7" font-size="14" text-anchor="end" fill="#d4d4d4">0</text>
<line x1="412.5" y1="283.5" x2="557.5" y2="283.5" stroke="#999" stroke-width="1"/>
<text x="411.0" y="288.7" font-size="14" text-anchor="end" fill="#d4d4d4">-5</text>
<line x1="412.5" y1="335.5" x2="557.5" y2="335.5" stroke="#999" stroke-width="1"/>
<text x="411.0" y="340.7" font-size="14" text-anchor="end" fill="#d4d4d4">-10</text>
<line x1="412.5" y1="384.5" x2="557.5" y2="384.5" stroke="#999" stroke-width="1"/>
<text x="411.0" y="389.7" font-size="14" text-anchor="end" fill="#d4d4d4">-15</text>
<line x1="417.5" y1="77.5" x2="557.5" y2="77.5" stroke="#999" stroke-width="1"/>
<line x1="417.5" y1="77" x2="417.5" y2="389.5" stroke="#999" stroke-width="1"/>
<line x1="557.5" y1="77" x2="557.5" y2="389.5" stroke="#999" stroke-width="1"/>
<text x="474.5" y="72.9" font-size="14" text-anchor="middle" fill="#ddd">DeltaL</text>
<text x="487.5" y="399.7" font-size="14" text-anchor="middle" textLength="36.5" lengthAdjust="spacingAndGlyphs" fill="#ddd">100W</text>
<line x1="431.5" y1="232.5" x2="543.5" y2="232.5" stroke="#222" stroke-width="1"/>
<rect x="608.5" y="78" width="140" height="306.5" fill="#262626"/>
<line x1="603.5" y1="79.5" x2="748.5" y2="79.5" stroke="#999" stroke-width="1"/>
<text x="602.0" y="84.7" font-size="14" text-anchor="end" fill="#d4d4d4">15</text>
<line x1="603.5" y1="130.5" x2="748.5" y2="130.5" stroke="#999" stroke-width="1"/>
<text x="602.0" y="135.7" font-size="14" text-anchor="end" fill="#d4d4d4">10</text>
<line x1="603.5" y1="181.5" x2="748.5" y2="181.5" stroke="#999" stroke-width="1"/>
<text x="602.0" y="186.7" font-size="14" text-anchor="end" fill="#d4d4d4">5</text>
<line x1="603.5" y1="232.5" x2="748.5" y2="232.5" stroke="#999" stroke-width="1"/>
<text x="602.0" y="237.7" font-size="14" text-anchor="end" fill="#d4d4d4">0</text>
<line x1="603.5" y1="283.5" x2="748.5" y2="283.5" stroke="#999" stroke-width="1"/>
<text x="602.0" y="288.7" font-size="14" text-anchor="end" fill="#d4d4d4">-5</text>
<line x1="603.5" y1="335.5" x2="748.5" y2="335.5" stroke="#999" stroke-width="1"/>
<text x="602.0" y="340.7" font-size="14" text-anchor="end" fill="#d4d4d4">-10</text>
<line x1="603.5" y1="384.5" x2="748.5" y2="384.5" stroke="#999" stroke-width="1"/>
<text x="602.0" y="389.7" font-size="14" text-anchor="end" fill="#d4d4d4">-15</text>
<line x1="608.5" y1="77.5" x2="748.5" y2="77.5" stroke="#999" stroke-width="1"/>
<line x1="608.5" y1="77" x2="608.5" y2="389.5" stroke="#999" stroke-width="1"/>
<line x1="748.5" y1="77" x2="748.5" y2="389.5" stroke="#999" stroke-width="1"/>
<text x="665.5" y="72.9" font-size="14" text-anchor="middle" fill="#ddd">DeltaC</text>
<text x="678.5" y="399.7" font-size="14" text-anchor="middle" textLength="36.5" lengthAdjust="spacingAndGlyphs" fill="#ddd">100W</text>
<rect x="623.2" y="169.2" width="110" height="63.3" fill="url(#gDC)" stroke="#000" stroke-width="1.4"/>
<rect x="799.5" y="78" width="140" height="306.5" fill="#262626"/>
<line x1="794.5" y1="79.5" x2="939.5" y2="79.5" stroke="#999" stroke-width="1"/>
<text x="793.0" y="84.7" font-size="14" text-anchor="end" fill="#d4d4d4">15</text>
<line x1="794.5" y1="130.5" x2="939.5" y2="130.5" stroke="#999" stroke-width="1"/>
<text x="793.0" y="135.7" font-size="14" text-anchor="end" fill="#d4d4d4">10</text>
<line x1="794.5" y1="181.5" x2="939.5" y2="181.5" stroke="#999" stroke-width="1"/>
<text x="793.0" y="186.7" font-size="14" text-anchor="end" fill="#d4d4d4">5</text>
<line x1="794.5" y1="232.5" x2="939.5" y2="232.5" stroke="#999" stroke-width="1"/>
<text x="793.0" y="237.7" font-size="14" text-anchor="end" fill="#d4d4d4">0</text>
<line x1="794.5" y1="283.5" x2="939.5" y2="283.5" stroke="#999" stroke-width="1"/>
<text x="793.0" y="288.7" font-size="14" text-anchor="end" fill="#d4d4d4">-5</text>
<line x1="794.5" y1="335.5" x2="939.5" y2="335.5" stroke="#999" stroke-width="1"/>
<text x="793.0" y="340.7" font-size="14" text-anchor="end" fill="#d4d4d4">-10</text>
<line x1="794.5" y1="384.5" x2="939.5" y2="384.5" stroke="#999" stroke-width="1"/>
<text x="793.0" y="389.7" font-size="14" text-anchor="end" fill="#d4d4d4">-15</text>
<line x1="799.5" y1="77.5" x2="939.5" y2="77.5" stroke="#999" stroke-width="1"/>
<line x1="799.5" y1="77" x2="799.5" y2="389.5" stroke="#999" stroke-width="1"/>
<line x1="939.5" y1="77" x2="939.5" y2="389.5" stroke="#999" stroke-width="1"/>
<text x="856.5" y="72.9" font-size="14" text-anchor="middle" fill="#ddd">DeltaH</text>
<text x="869.5" y="399.7" font-size="14" text-anchor="middle" textLength="36.5" lengthAdjust="spacingAndGlyphs" fill="#ddd">100W</text>
<line x1="813.5" y1="232.5" x2="925.5" y2="232.5" stroke="#222" stroke-width="1"/>
<!-- sec_sw -->
<rect x="386" y="416.3" width="572" height="157.4" fill="#000"/>
<rect x="403.5" y="423.5" width="59" height="64.5" fill="#b4beba"/>
<rect x="403.5" y="488" width="59" height="63.5" fill="#bebebe"/>
<rect x="403.5" y="423.5" width="59" height="128" fill="none" stroke="#fff" stroke-width="1"/>
<text x="433.0" y="566.0" font-size="11.8" text-anchor="middle" fill="#fff" stroke="#fff" stroke-width="0.45">White</text>
<rect x="473.5" y="423.5" width="59" height="64.5" fill="#b03838"/>
<rect x="473.5" y="488" width="59" height="63.5" fill="#d0001c"/>
<rect x="473.5" y="423.5" width="59" height="128" fill="none" stroke="#fff" stroke-width="1"/>
<text x="503.0" y="566.0" font-size="11.8" text-anchor="middle" fill="#fff" stroke="#fff" stroke-width="0.45">Red</text>
<rect x="543.5" y="423.5" width="59" height="64.5" fill="#6cc478"/>
<rect x="543.5" y="488" width="59" height="63.5" fill="#00c848"/>
<rect x="543.5" y="423.5" width="59" height="128" fill="none" stroke="#fff" stroke-width="1"/>
<text x="573.0" y="566.0" font-size="11.8" text-anchor="middle" fill="#fff" stroke="#fff" stroke-width="0.45">Green</text>
<rect x="613.5" y="423.5" width="59" height="64.5" fill="#0810b4"/>
<rect x="613.5" y="488" width="59" height="63.5" fill="#0000c0"/>
<rect x="613.5" y="423.5" width="59" height="128" fill="none" stroke="#fff" stroke-width="1"/>
<text x="643.0" y="566.0" font-size="11.8" text-anchor="middle" fill="#fff" stroke="#fff" stroke-width="0.45">Blue</text>
<rect x="682.5" y="423.5" width="59" height="64.5" fill="#6cc8c4"/>
<rect x="682.5" y="488" width="59" height="63.5" fill="#00c8c8"/>
<rect x="682.5" y="423.5" width="59" height="128" fill="none" stroke="#fff" stroke-width="1"/>
<text x="712.0" y="566.0" font-size="11.8" text-anchor="middle" fill="#fff" stroke="#fff" stroke-width="0.45">Cyan</text>
<rect x="752.5" y="423.5" width="59" height="64.5" fill="#b434bc"/>
<rect x="752.5" y="488" width="59" height="63.5" fill="#d000c8"/>
<rect x="752.5" y="423.5" width="59" height="128" fill="none" stroke="#fff" stroke-width="1"/>
<text x="782.0" y="566.0" font-size="11.8" text-anchor="middle" fill="#fff" stroke="#fff" stroke-width="0.45">Magenta</text>
<rect x="822.5" y="423.5" width="59" height="64.5" fill="#b8c05c"/>
<rect x="822.5" y="488" width="59" height="63.5" fill="#c4c400"/>
<rect x="822.5" y="423.5" width="59" height="128" fill="none" stroke="#fff" stroke-width="1"/>
<text x="852.0" y="566.0" font-size="11.8" text-anchor="middle" fill="#fff" stroke="#fff" stroke-width="0.45">Yellow</text>
<rect x="892.5" y="423.5" width="59" height="64.5" fill="#f0fffc"/>
<rect x="892.5" y="488" width="59" height="63.5" fill="#fafafa"/>
<rect x="892.5" y="423.5" width="59" height="128" fill="none" stroke="#fff" stroke-width="1"/>
<text x="922.0" y="566.0" font-size="11.8" text-anchor="middle" fill="#fff" stroke="#fff" stroke-width="0.45">100W</text>
<text x="0.0" y="0.0" font-size="11.8" text-anchor="middle" fill="#fff" stroke="#fff" stroke-width="0.45" transform="translate(398.3,451.5) rotate(-90)">Actual</text>
<text x="0.0" y="0.0" font-size="11.8" text-anchor="middle" fill="#fff" stroke="#fff" stroke-width="0.45" transform="translate(398.3,523.5) rotate(-90)">Target</text>
<!-- sec_cie -->
<line x1="1007.5" y1="553" x2="1007.5" y2="559" stroke="#ddd" stroke-width="1.6"/>
<text x="1007.8" y="573.7" font-size="14" text-anchor="middle" fill="#d8d8d8">0</text>
<line x1="1002" y1="553.5" x2="1007.5" y2="553.5" stroke="#ccc" stroke-width="1.4"/>
<text x="1001.5" y="560.3" font-size="14" text-anchor="end" fill="#d8d8d8">0</text>
<line x1="1059.5" y1="553" x2="1059.5" y2="559" stroke="#ccc" stroke-width="1"/>
<text x="1059.3" y="573.7" font-size="14" text-anchor="middle" fill="#d8d8d8">0,05</text>
<line x1="1002" y1="513.5" x2="1007.5" y2="513.5" stroke="#ccc" stroke-width="1.4"/>
<text x="1001.5" y="520.6" font-size="14" text-anchor="end" fill="#d8d8d8">0,05</text>
<line x1="1110.5" y1="553" x2="1110.5" y2="559" stroke="#ccc" stroke-width="1"/>
<text x="1110.8" y="573.7" font-size="14" text-anchor="middle" fill="#d8d8d8">0,1</text>
<line x1="1002" y1="473.5" x2="1007.5" y2="473.5" stroke="#ccc" stroke-width="1.4"/>
<text x="1001.5" y="480.9" font-size="14" text-anchor="end" fill="#d8d8d8">0,1</text>
<line x1="1162.5" y1="553" x2="1162.5" y2="559" stroke="#ccc" stroke-width="1"/>
<text x="1162.3" y="573.7" font-size="14" text-anchor="middle" fill="#d8d8d8">0,15</text>
<line x1="1002" y1="434.5" x2="1007.5" y2="434.5" stroke="#ccc" stroke-width="1.4"/>
<text x="1001.5" y="441.2" font-size="14" text-anchor="end" fill="#d8d8d8">0,15</text>
<line x1="1213.5" y1="553" x2="1213.5" y2="559" stroke="#ccc" stroke-width="1"/>
<text x="1213.8" y="573.7" font-size="14" text-anchor="middle" fill="#d8d8d8">0,2</text>
<line x1="1002" y1="394.5" x2="1007.5" y2="394.5" stroke="#ccc" stroke-width="1.4"/>
<text x="1001.5" y="401.4" font-size="14" text-anchor="end" fill="#d8d8d8">0,2</text>
<line x1="1265.5" y1="553" x2="1265.5" y2="559" stroke="#ccc" stroke-width="1"/>
<text x="1265.3" y="573.7" font-size="14" text-anchor="middle" fill="#d8d8d8">0,25</text>
<line x1="1002" y1="354.5" x2="1007.5" y2="354.5" stroke="#ccc" stroke-width="1.4"/>
<text x="1001.5" y="361.7" font-size="14" text-anchor="end" fill="#d8d8d8">0,25</text>
<line x1="1316.5" y1="553" x2="1316.5" y2="559" stroke="#ccc" stroke-width="1"/>
<text x="1316.8" y="573.7" font-size="14" text-anchor="middle" fill="#d8d8d8">0,3</text>
<line x1="1002" y1="315.5" x2="1007.5" y2="315.5" stroke="#ccc" stroke-width="1.4"/>
<text x="1001.5" y="322.0" font-size="14" text-anchor="end" fill="#d8d8d8">0,3</text>
<line x1="1368.5" y1="553" x2="1368.5" y2="559" stroke="#ccc" stroke-width="1"/>
<text x="1368.3" y="573.7" font-size="14" text-anchor="middle" fill="#d8d8d8">0,35</text>
<line x1="1002" y1="275.5" x2="1007.5" y2="275.5" stroke="#ccc" stroke-width="1.4"/>
<text x="1001.5" y="282.3" font-size="14" text-anchor="end" fill="#d8d8d8">0,35</text>
<line x1="1419.5" y1="553" x2="1419.5" y2="559" stroke="#ccc" stroke-width="1"/>
<text x="1419.8" y="573.7" font-size="14" text-anchor="middle" fill="#d8d8d8">0,4</text>
<line x1="1002" y1="236.5" x2="1007.5" y2="236.5" stroke="#ccc" stroke-width="1.4"/>
<text x="1001.5" y="242.6" font-size="14" text-anchor="end" fill="#d8d8d8">0,4</text>
<line x1="1471.5" y1="553" x2="1471.5" y2="559" stroke="#ccc" stroke-width="1"/>
<text x="1471.3" y="573.7" font-size="14" text-anchor="middle" fill="#d8d8d8">0,45</text>
<line x1="1002" y1="196.5" x2="1007.5" y2="196.5" stroke="#ccc" stroke-width="1.4"/>
<text x="1001.5" y="202.9" font-size="14" text-anchor="end" fill="#d8d8d8">0,45</text>
<line x1="1522.5" y1="553" x2="1522.5" y2="559" stroke="#ccc" stroke-width="1"/>
<text x="1522.8" y="573.7" font-size="14" text-anchor="middle" fill="#d8d8d8">0,5</text>
<line x1="1002" y1="156.5" x2="1007.5" y2="156.5" stroke="#ccc" stroke-width="1.4"/>
<text x="1001.5" y="163.2" font-size="14" text-anchor="end" fill="#d8d8d8">0,5</text>
<line x1="1574.5" y1="553" x2="1574.5" y2="559" stroke="#ccc" stroke-width="1"/>
<text x="1574.3" y="573.7" font-size="14" text-anchor="middle" fill="#d8d8d8">0,55</text>
<line x1="1002" y1="117.5" x2="1007.5" y2="117.5" stroke="#ccc" stroke-width="1.4"/>
<text x="1001.5" y="123.4" font-size="14" text-anchor="end" fill="#d8d8d8">0,55</text>
<text x="1300.9" y="72.7" font-size="14" text-anchor="middle" textLength="81.5" lengthAdjust="spacingAndGlyphs" fill="#ddd">CIE 1976 u'v'</text>
<rect x="1512.5" y="129.1" width="13" height="13" fill="none" stroke="#fff" stroke-width="1.3"/>
<rect x="1102.9" y="87.8" width="13" height="13" fill="none" stroke="#fff" stroke-width="1.3"/>
<rect x="1182.0" y="420.4" width="13" height="13" fill="none" stroke="#fff" stroke-width="1.3"/>
<rect x="1126.2" y="186.0" width="13" height="13" fill="none" stroke="#fff" stroke-width="1.3"/>
<rect x="1335.6" y="285.0" width="13" height="13" fill="none" stroke="#fff" stroke-width="1.3"/>
<rect x="1212.2" y="98.8" width="13" height="13" fill="none" stroke="#fff" stroke-width="1.3"/>
<rect x="1205.6" y="174.9" width="12" height="12" fill="#fff" fill-opacity="0.85" stroke="#000" stroke-width="1.5"/>
<circle cx="1453.2" cy="137.1" r="4.5" fill="#c81414" stroke="#000" stroke-opacity="0.75" stroke-width="1.1"/>
<circle cx="1137.0" cy="106.1" r="4.5" fill="#14a014" stroke="#000" stroke-opacity="0.75" stroke-width="1.1"/>
<circle cx="1188.0" cy="418.8" r="4.5" fill="#0a0ac8" stroke="#000" stroke-opacity="0.75" stroke-width="1.1"/>
<circle cx="1150.2" cy="189.7" r="4.5" fill="#14a8a8" stroke="#000" stroke-opacity="0.75" stroke-width="1.1"/>
<circle cx="1306.0" cy="293.0" r="4.5" fill="#b414b4" stroke="#000" stroke-opacity="0.75" stroke-width="1.1"/>
<circle cx="1210.1" cy="112.8" r="4.5" fill="#b4b414" stroke="#000" stroke-opacity="0.75" stroke-width="1.1"/>
<circle cx="1204.1" cy="180.7" r="4.6" fill="#fff" stroke="#000" stroke-width="1.2"/>
<rect x="1379" y="522" width="244" height="26" fill="#333"/>
<text x="1380.3" y="541.9" font-size="20" textLength="150.3" lengthAdjust="spacingAndGlyphs" fill="#f4f4f4">Gamut Coverage:</text>
<text x="1541.5" y="541.9" font-size="20" textLength="53.5" lengthAdjust="spacingAndGlyphs" fill="#f4f4f4">70,1%</text>
<!-- sec_read -->
<text x="37.3" y="650.6" font-size="27.5" textLength="211.0" lengthAdjust="spacingAndGlyphs" fill="#f2f2f2">Current Reading</text>
<text x="37.3" y="718.5" font-size="22" textLength="98.3" lengthAdjust="spacingAndGlyphs" fill="#f2f2f2">x: 0,3037</text>
<text x="188.6" y="718.5" font-size="22" textLength="99.3" lengthAdjust="spacingAndGlyphs" fill="#f2f2f2">y: 0,3315</text>
<text x="37.3" y="757.3" font-size="22" textLength="106.2" lengthAdjust="spacingAndGlyphs" fill="#f2f2f2">fL: 133,63</text>
<text x="37.3" y="797.5" font-size="22" textLength="153.6" lengthAdjust="spacingAndGlyphs" fill="#f2f2f2">cd/m²: 457,84</text>
<rect x="364.5" y="625.5" width="246" height="174" fill="#262626"/>
<line x1="359.5" y1="626.5" x2="610.5" y2="626.5" stroke="#999" stroke-width="1"/>
<text x="358.5" y="631.7" font-size="14" text-anchor="end" fill="#d4d4d4">20</text>
<line x1="359.5" y1="669.5" x2="610.5" y2="669.5" stroke="#999" stroke-width="1"/>
<text x="358.5" y="674.7" font-size="14" text-anchor="end" fill="#d4d4d4">10</text>
<line x1="359.5" y1="712.5" x2="610.5" y2="712.5" stroke="#999" stroke-width="1"/>
<text x="358.5" y="717.7" font-size="14" text-anchor="end" fill="#d4d4d4">0</text>
<line x1="359.5" y1="756.5" x2="610.5" y2="756.5" stroke="#999" stroke-width="1"/>
<text x="358.5" y="761.7" font-size="14" text-anchor="end" fill="#d4d4d4">-10</text>
<line x1="359.5" y1="799.5" x2="610.5" y2="799.5" stroke="#999" stroke-width="1"/>
<text x="358.5" y="804.7" font-size="14" text-anchor="end" fill="#d4d4d4">-20</text>
<line x1="364.5" y1="624.5" x2="610.5" y2="624.5" stroke="#999" stroke-width="1"/>
<line x1="364.5" y1="624" x2="364.5" y2="804.5" stroke="#999" stroke-width="1"/>
<line x1="610.5" y1="624" x2="610.5" y2="804.5" stroke="#999" stroke-width="1"/>
<rect x="389.9" y="712.6" width="64.8" height="47.6" fill="url(#gRb)" stroke="#000" stroke-width="1.2"/>
<rect x="455.8" y="698.7" width="65.2" height="13.8" fill="url(#gGb)" stroke="#000" stroke-width="1.2"/>
<rect x="521.6" y="707.7" width="65.2" height="4.8" fill="url(#gBb)" stroke="#000" stroke-width="1.2"/>
<text x="474.6" y="620.0" font-size="14" text-anchor="middle" textLength="80.0" lengthAdjust="spacingAndGlyphs" fill="#ddd">RGB Balance</text>
<text x="487.5" y="815.0" font-size="14" text-anchor="middle" textLength="36.5" lengthAdjust="spacingAndGlyphs" fill="#ddd">100W</text>
<text x="803.4" y="612.0" font-size="14" text-anchor="middle" textLength="73.0" lengthAdjust="spacingAndGlyphs" fill="#ddd">CIE 1931 xy</text>
<rect x="638.5" y="616.5" width="330" height="192" fill="none" stroke="#aaa" stroke-width="1"/>
<circle cx="745" cy="699" r="3.6" fill="#bbb" stroke="#222" stroke-width="0.9"/>
<circle cx="743.3" cy="701.7" r="4.4" fill="#fff" stroke="#000" stroke-width="1.1"/>
<rect x="796.6" y="705.2" width="13" height="13" fill="#fff" stroke="#000" stroke-width="1.7"/>
<!-- sec_table -->
<rect x="986" y="603" width="14" height="37.5" fill="#000"/>
<rect x="1000" y="603" width="599" height="37.5" fill="url(#gHdr)"/>
<rect x="1000" y="640.5" width="599" height="35" fill="#414141"/>
<rect x="986" y="640.5" width="14" height="35" fill="url(#gRowH)"/>
<rect x="1000" y="675.5" width="599" height="34.5" fill="#7a7a7a"/>
<rect x="986" y="675.5" width="14" height="34.5" fill="url(#gRowH)"/>
<rect x="1000" y="710" width="599" height="35" fill="#414141"/>
<rect x="986" y="710" width="14" height="35" fill="url(#gRowH)"/>
<rect x="1000" y="745" width="599" height="35" fill="#7a7a7a"/>
<rect x="986" y="745" width="14" height="35" fill="url(#gRowH)"/>
<rect x="1000" y="780" width="599" height="14.5" fill="#414141"/>
<rect x="986" y="780" width="14" height="14.5" fill="url(#gRowH)"/>
<g clip-path="url(#cpT)" font-size="19.5">
<text x="1074.2" y="628.8" textLength="40.8" lengthAdjust="spacingAndGlyphs" fill="#f4f4f4">White</text>
<text x="1150.9" y="628.8" textLength="25.3" lengthAdjust="spacingAndGlyphs" fill="#f4f4f4">Red</text>
<text x="1218.8" y="628.8" textLength="40.8" lengthAdjust="spacingAndGlyphs" fill="#f4f4f4">Green</text>
<text x="1295.0" y="628.8" textLength="29.5" lengthAdjust="spacingAndGlyphs" fill="#f4f4f4">Blue</text>
<text x="1362.7" y="628.8" textLength="32.8" lengthAdjust="spacingAndGlyphs" fill="#f4f4f4">Cyan</text>
<text x="1439.4" y="628.8" textLength="59.9" lengthAdjust="spacingAndGlyphs" fill="#f4f4f4">Magenta</text>
<text x="1508.3" y="628.8" textLength="43.4" lengthAdjust="spacingAndGlyphs" fill="#f4f4f4">Yellow</text>
<text x="1584.7" y="628.8" textLength="40.8" lengthAdjust="spacingAndGlyphs" fill="#f4f4f4">100W</text>
<text x="1004.5" y="665.7" textLength="56.0" lengthAdjust="spacingAndGlyphs" fill="#f0f0f0">x: CIE31</text>
<text x="1074.2" y="665.7" textLength="47.7" lengthAdjust="spacingAndGlyphs" fill="#f0f0f0">0,3038</text>
<text x="1150.9" y="665.7" textLength="47.7" lengthAdjust="spacingAndGlyphs" fill="#f0f0f0">0,6250</text>
<text x="1218.8" y="665.7" textLength="47.7" lengthAdjust="spacingAndGlyphs" fill="#f0f0f0">0,3004</text>
<text x="1295.0" y="665.7" textLength="47.7" lengthAdjust="spacingAndGlyphs" fill="#f0f0f0">0,1518</text>
<text x="1362.7" y="665.7" textLength="47.7" lengthAdjust="spacingAndGlyphs" fill="#f0f0f0">0,2253</text>
<text x="1439.4" y="665.7" textLength="47.7" lengthAdjust="spacingAndGlyphs" fill="#f0f0f0">0,3059</text>
<text x="1508.3" y="665.7" textLength="47.7" lengthAdjust="spacingAndGlyphs" fill="#f0f0f0">0,4091</text>
<text x="1584.7" y="665.7" textLength="47.7" lengthAdjust="spacingAndGlyphs" fill="#f0f0f0">0,3038</text>
<text x="1004.5" y="700.6" textLength="56.0" lengthAdjust="spacingAndGlyphs" fill="#f0f0f0">y: CIE31</text>
<text x="1074.2" y="700.6" textLength="47.7" lengthAdjust="spacingAndGlyphs" fill="#f0f0f0">0,3320</text>
<text x="1150.9" y="700.6" textLength="47.7" lengthAdjust="spacingAndGlyphs" fill="#f0f0f0">0,3359</text>
<text x="1218.8" y="700.6" textLength="47.7" lengthAdjust="spacingAndGlyphs" fill="#f0f0f0">0,5983</text>
<text x="1295.0" y="700.6" textLength="47.7" lengthAdjust="spacingAndGlyphs" fill="#f0f0f0">0,0646</text>
<text x="1362.7" y="700.6" textLength="47.7" lengthAdjust="spacingAndGlyphs" fill="#f0f0f0">0,3307</text>
<text x="1439.4" y="700.6" textLength="47.7" lengthAdjust="spacingAndGlyphs" fill="#f0f0f0">0,1532</text>
<text x="1508.3" y="700.6" textLength="47.7" lengthAdjust="spacingAndGlyphs" fill="#f0f0f0">0,5126</text>
<text x="1584.7" y="700.6" textLength="47.7" lengthAdjust="spacingAndGlyphs" fill="#f0f0f0">0,3320</text>
<text x="1004.5" y="735.4" textLength="10.4" lengthAdjust="spacingAndGlyphs" fill="#f0f0f0">Y</text>
<text x="1074.2" y="735.4" textLength="65.1" lengthAdjust="spacingAndGlyphs" fill="#f0f0f0">236,4547</text>
<text x="1150.9" y="735.4" textLength="55.2" lengthAdjust="spacingAndGlyphs" fill="#f0f0f0">46,8117</text>
<text x="1218.8" y="735.4" textLength="65.1" lengthAdjust="spacingAndGlyphs" fill="#f0f0f0">168,7948</text>
<text x="1295.0" y="735.4" textLength="56.4" lengthAdjust="spacingAndGlyphs" fill="#f0f0f0">18,4406</text>
<text x="1362.7" y="735.4" textLength="65.1" lengthAdjust="spacingAndGlyphs" fill="#f0f0f0">189,3295</text>
<text x="1439.4" y="735.4" textLength="56.4" lengthAdjust="spacingAndGlyphs" fill="#f0f0f0">65,1863</text>
<text x="1508.3" y="735.4" textLength="65.1" lengthAdjust="spacingAndGlyphs" fill="#f0f0f0">216,0477</text>
<text x="1584.7" y="735.4" textLength="65.1" lengthAdjust="spacingAndGlyphs" fill="#f0f0f0">457,8400</text>
<text x="1004.5" y="770.3" textLength="57.5" lengthAdjust="spacingAndGlyphs" fill="#f0f0f0">Target Y</text>
<text x="1074.2" y="770.3" textLength="65.1" lengthAdjust="spacingAndGlyphs" fill="#f0f0f0">236,4547</text>
<text x="1150.9" y="770.3" textLength="56.4" lengthAdjust="spacingAndGlyphs" fill="#f0f0f0">54,1455</text>
<text x="1218.8" y="770.3" textLength="65.1" lengthAdjust="spacingAndGlyphs" fill="#f0f0f0">163,5630</text>
<text x="1295.0" y="770.3" textLength="56.4" lengthAdjust="spacingAndGlyphs" fill="#f0f0f0">18,7462</text>
<text x="1362.7" y="770.3" textLength="65.1" lengthAdjust="spacingAndGlyphs" fill="#f0f0f0">182,3091</text>
<text x="1439.4" y="770.3" textLength="56.4" lengthAdjust="spacingAndGlyphs" fill="#f0f0f0">72,8917</text>
<text x="1508.3" y="770.3" textLength="65.1" lengthAdjust="spacingAndGlyphs" fill="#f0f0f0">217,7085</text>
<text x="1584.7" y="770.3" textLength="65.1" lengthAdjust="spacingAndGlyphs" fill="#f0f0f0">457,8400</text>
<text x="1004.5" y="805.2" textLength="59.9" lengthAdjust="spacingAndGlyphs" fill="#f0f0f0">ΔE 2000</text>
<text x="1074.2" y="805.2" textLength="47.7" lengthAdjust="spacingAndGlyphs" fill="#f0f0f0">6,4699</text>
<text x="1150.9" y="805.2" textLength="47.7" lengthAdjust="spacingAndGlyphs" fill="#f0f0f0">6,3217</text>
<text x="1218.8" y="805.2" textLength="47.7" lengthAdjust="spacingAndGlyphs" fill="#f0f0f0">5,3638</text>
<text x="1295.0" y="805.2" textLength="47.7" lengthAdjust="spacingAndGlyphs" fill="#f0f0f0">1,2462</text>
<text x="1362.7" y="805.2" textLength="47.7" lengthAdjust="spacingAndGlyphs" fill="#f0f0f0">4,2068</text>
<text x="1439.4" y="805.2" textLength="47.7" lengthAdjust="spacingAndGlyphs" fill="#f0f0f0">4,4465</text>
<text x="1508.3" y="805.2" textLength="47.7" lengthAdjust="spacingAndGlyphs" fill="#f0f0f0">6,4431</text>
<text x="1584.7" y="805.2" textLength="47.7" lengthAdjust="spacingAndGlyphs" fill="#f0f0f0">7,6312</text>
</g>
<rect x="1000" y="794.5" width="599" height="21" fill="#585858" rx="2"/>
<rect x="1018" y="796.5" width="513" height="17.5" fill="#434343" rx="8"/>
<rect x="1001" y="796" width="14.5" height="18.5" fill="#808080" rx="2"/>
<path d="M1011.5,799.5 v11.5 l-6.5,-5.75z" fill="#3e3e3e"/>
<rect x="1583.5" y="796" width="14.5" height="18.5" fill="#808080" rx="2"/>
<path d="M1587.5,799.5 v11.5 l6.5,-5.75z" fill="#3e3e3e"/>
<rect x="1599" y="641" width="16" height="152.5" fill="#585858" rx="2"/>
<rect x="1600.5" y="665" width="13" height="84" fill="#434343" rx="6"/>
<rect x="1600" y="642.5" width="14.5" height="18" fill="#808080" rx="2"/>
<path d="M1601.5,655.5 h11.5 l-5.75,-6.5z" fill="#3e3e3e"/>
<rect x="1600" y="774" width="14.5" height="18" fill="#808080" rx="2"/>
<path d="M1601.5,779.5 h11.5 l-5.75,6.5z" fill="#3e3e3e"/>
<!-- sec_bottom -->
<rect x="-3.6" y="824.5" width="155.6" height="80" rx="5" fill="url(#gPan)"/>
<rect x="3.0" y="831" width="142.6" height="45" rx="4.5" fill="#c0c0c0"/>
<rect x="3.7" y="831.7" width="141.6" height="43.6" rx="4" fill="none" stroke="#8a8a8a" stroke-opacity="0.6" stroke-width="1.2"/>
<text x="74.2" y="894.4" font-size="13" text-anchor="middle" font-weight="bold" fill="#2c2c2c">White</text>
<rect x="154.3" y="824.5" width="155.6" height="80" rx="5" fill="url(#gPan)"/>
<rect x="160.9" y="831" width="142.6" height="45" rx="4.5" fill="#c00000"/>
<text x="232.1" y="894.4" font-size="13" text-anchor="middle" font-weight="bold" fill="#2c2c2c">Red</text>
<rect x="312.2" y="824.5" width="155.6" height="80" rx="5" fill="url(#gPan)"/>
<rect x="318.8" y="831" width="142.6" height="45" rx="4.5" fill="#00c000"/>
<text x="390.0" y="894.4" font-size="13" text-anchor="middle" font-weight="bold" fill="#2c2c2c">Green</text>
<rect x="470.1" y="824.5" width="155.6" height="80" rx="5" fill="url(#gPan)"/>
<rect x="476.7" y="831" width="142.6" height="45" rx="4.5" fill="#0000c0"/>
<text x="547.9" y="894.4" font-size="13" text-anchor="middle" font-weight="bold" fill="#2c2c2c">Blue</text>
<rect x="628.0" y="824.5" width="155.6" height="80" rx="5" fill="url(#gPan)"/>
<rect x="634.6" y="831" width="142.6" height="45" rx="4.5" fill="#00c0c0"/>
<text x="705.8" y="894.4" font-size="13" text-anchor="middle" font-weight="bold" fill="#2c2c2c">Cyan</text>
<rect x="785.9" y="824.5" width="155.6" height="80" rx="5" fill="url(#gPan)"/>
<rect x="792.5" y="831" width="142.6" height="45" rx="4.5" fill="#c000c0"/>
<text x="863.7" y="894.4" font-size="13" text-anchor="middle" font-weight="bold" fill="#2c2c2c">Magenta</text>
<rect x="943.8" y="824.5" width="155.6" height="80" rx="5" fill="url(#gPan)"/>
<rect x="950.4" y="831" width="142.6" height="45" rx="4.5" fill="#c4c400"/>
<text x="1021.6" y="894.4" font-size="13" text-anchor="middle" font-weight="bold" fill="#2c2c2c">Yellow</text>
<rect x="1101.7" y="824.5" width="155.6" height="80" rx="5" fill="url(#gSel)"/>
<rect x="1108.3" y="831" width="142.6" height="45" rx="4.5" fill="#ffffff"/>
<text x="1179.5" y="894.4" font-size="13" text-anchor="middle" font-weight="bold" fill="#fff">100W</text>
<path d="M1261.2,847.3 v-18.8 a4,4 0 0 1 4,-4 h52 a4,4 0 0 1 4,4 v18.8z" fill="url(#gUp)"/>
<circle cx="1291.4" cy="836" r="9.5" fill="url(#gCc)"/>
<path d="M1285.8,838.2 h11.2 l-5.6,-6z" fill="#3c3c3c"/>
<rect x="1261.2" y="848.3" width="60" height="43" fill="url(#gSt)"/>
<rect x="1273" y="856.6" width="36.2" height="45" rx="5" fill="url(#gSq)" stroke="#2a2a2a" stroke-width="2.4"/>
<rect x="1282.9" y="866" width="17" height="8.5" fill="#202020"/>
<rect x="1282.9" y="874.5" width="17" height="8.3" fill="#000"/>
<rect x="1322.5" y="824.5" width="57.5" height="37.5" fill="url(#gCb)"/>
<circle cx="1351" cy="843.3" r="12.3" fill="url(#gCc)"/>
<rect x="1381" y="824.5" width="55.2" height="37.5" fill="url(#gCb)"/>
<circle cx="1408.3" cy="843.3" r="12.3" fill="url(#gCc)"/>
<rect x="1437.2" y="824.5" width="55.3" height="37.5" fill="url(#gCb)"/>
<circle cx="1464.9" cy="843.3" r="12.3" fill="url(#gCc)"/>
<rect x="1493.5" y="824.5" width="55.4" height="37.5" fill="url(#gCb)"/>
<circle cx="1521" cy="843.3" r="12.3" fill="url(#gCc)"/>
<rect x="1549.9" y="824.5" width="54.6" height="37.5" fill="url(#gCb)"/>
<circle cx="1577.5" cy="843.3" r="12.3" fill="url(#gCc)"/>
<rect x="1346.2" y="838.6" width="9.8" height="9.6" fill="#3a3a3a"/>
<path d="M1404.6,837 l10.2,6.2 l-10.2,6.4z" fill="#3a3a3a"/>
<path d="M1460.3000000000002,837.5 h-2.6 v11.8 h2.6 M1469.5,837.5 h2.6 v11.8 h-2.6" fill="none" stroke="#3a3a3a" stroke-width="2.2"/>
<path d="M1461.3000000000002,843.3 h2.4 M1466.1000000000001,843.3 h2.4" stroke="#3a3a3a" stroke-width="2"/>
<path d="M1521,843.3 c2.5,-4.6 8,-4.6 8,0 c0,4.6 -5.5,4.6 -8,0 c-2.5,-4.6 -8,-4.6 -8,0 c0,4.6 5.5,4.6 8,0z" fill="none" stroke="#3a3a3a" stroke-width="2.3"/>
<path d="M1571.9,842.0999999999999 a5.8,5.8 0 0 1 9.6,-3.2 M1583.1,844.5 a5.8,5.8 0 0 1 -9.6,3.2" fill="none" stroke="#3a3a3a" stroke-width="2.6"/>
<path d="M1579.5,840.3 l5.4,0 l0,-5.2z M1575.5,846.3 l-5.4,0 l0,5.2z" fill="#3a3a3a"/>
<rect x="1322.5" y="863.3" width="169.5" height="30" fill="url(#gCb2)"/>
<rect x="1494" y="863.3" width="150" height="30" fill="url(#gCb2)"/>
<circle cx="1361" cy="882.2" r="12.3" fill="url(#gCc)"/>
<circle cx="1628" cy="882.2" r="12.3" fill="url(#gCc)"/>
<path d="M1360.2,877 l-4.6,5.2 l4.6,5.2 M1366,877 l-4.6,5.2 l4.6,5.2" fill="none" stroke="#3a3a3a" stroke-width="2"/>
<path d="M1623.4,877 l4.6,5.2 l-4.6,5.2 M1629.2,877 l4.6,5.2 l-4.6,5.2" fill="none" stroke="#3a3a3a" stroke-width="2"/>
<text x="1393.8" y="893.2" font-size="30" textLength="64.0" lengthAdjust="spacingAndGlyphs" fill="#2c2c2c" stroke="#2c2c2c" stroke-width="0.6">Back</text>
<text x="1527.2" y="893.2" font-size="30" textLength="65.5" lengthAdjust="spacingAndGlyphs" fill="#2c2c2c" stroke="#2c2c2c" stroke-width="0.6">Next</text>
<g fill="#000" fill-opacity="0.35"><polygon points="1635.9,842.8 1637.6,860.0 1630.2,860.0 1631.9,842.8"/><polygon points="1634.9,844.5 1620.9,854.6 1617.2,848.2 1632.9,841.1"/><polygon points="1632.9,844.5 1617.2,837.4 1620.9,831.0 1634.9,841.1"/><polygon points="1631.9,842.8 1630.2,825.6 1637.6,825.6 1635.9,842.8"/><polygon points="1632.9,841.1 1646.9,831.0 1650.6,837.4 1634.9,844.5"/><polygon points="1634.9,841.1 1650.6,848.2 1646.9,854.6 1632.9,844.5"/></g>
<g fill="#e81212" fill-opacity="1"><polygon points="1634.9,841.5 1636.6,858.7 1629.2,858.7 1630.9,841.5"/><polygon points="1633.9,843.2 1619.9,853.3 1616.2,846.9 1631.9,839.8"/><polygon points="1631.9,843.2 1616.2,836.1 1619.9,829.7 1633.9,839.8"/><polygon points="1630.9,841.5 1629.2,824.3 1636.6,824.3 1634.9,841.5"/><polygon points="1631.9,839.8 1645.9,829.7 1649.6,836.1 1633.9,843.2"/><polygon points="1633.9,839.8 1649.6,846.9 1645.9,853.3 1631.9,843.2"/></g>
<circle cx="1632.9" cy="841.5" r="3.2" fill="#e81212"/>
</svg>
</body></html>
